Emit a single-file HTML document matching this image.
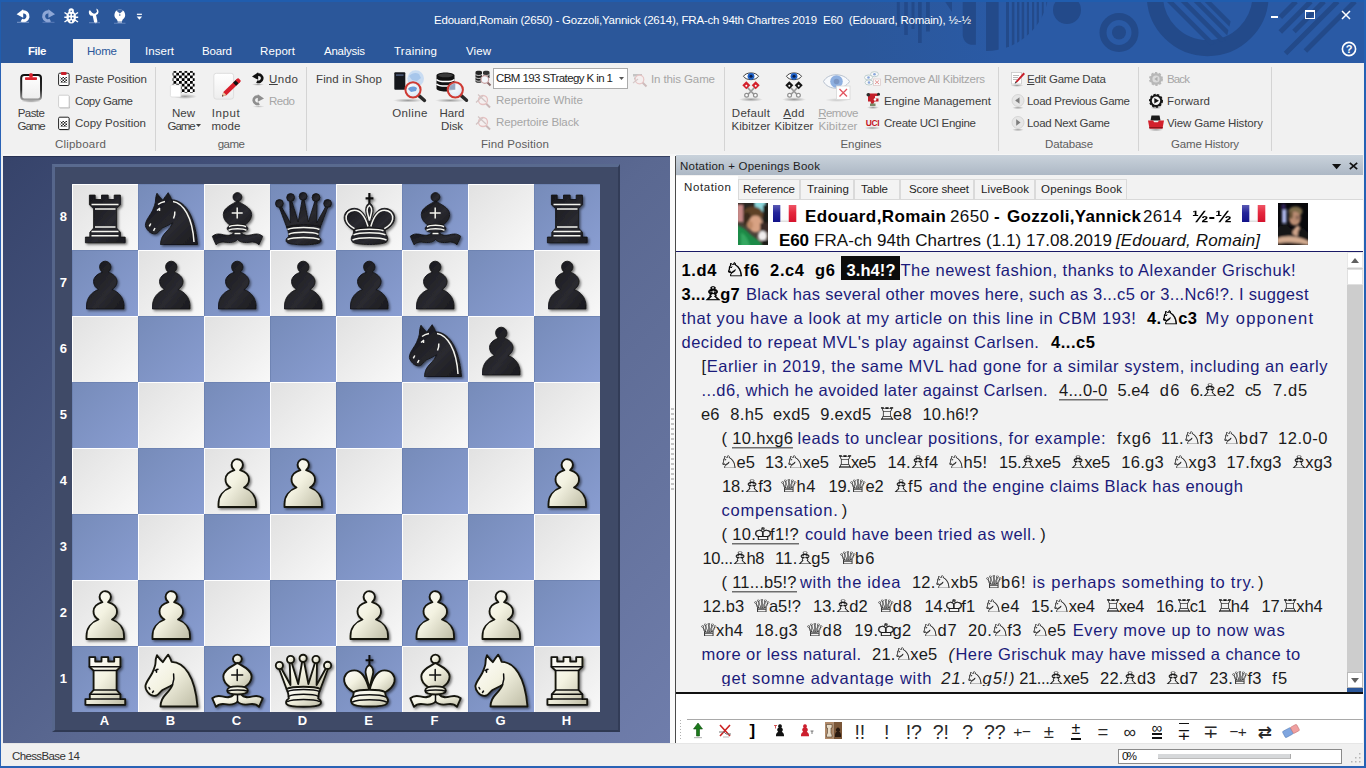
<!DOCTYPE html><html lang="en"><head><meta charset="utf-8"><title>ChessBase 14</title><style>
*{box-sizing:border-box;margin:0;padding:0}
html,body{width:1366px;height:768px;overflow:hidden}
body{position:relative;background:#2b579a;font-family:"Liberation Sans",sans-serif;font-size:11.5px;color:#404040}
.a{position:absolute}
.t{position:absolute;white-space:pre;display:block}
.t>span{display:inline-block}
svg{position:absolute;overflow:visible}
.g{color:#a6a6a6}
u{text-decoration:underline;text-underline-offset:1px}
.sep{position:absolute;top:67px;height:84px;width:1px;background:#d4d4d4}

.nl{position:absolute;white-space:pre;height:24px;line-height:24px;font-family:"Liberation Sans","DejaVu Sans",sans-serif;font-size:16.5px;color:#1a1a1a}
.nl>span{display:inline-block}
.nl .m{font-weight:bold;color:#000}
.nl .c{color:#1b1b7a}
.nl .iv{font-style:italic}
.nl .h{font-weight:bold;color:#fff}
.nl .u{background:linear-gradient(#6e6e6e,#6e6e6e) 0 21px/100% 1.5px no-repeat;display:inline-block;height:24px}
.nl i.f{display:inline-block;font-style:normal;font-weight:normal;font-family:"DejaVu Sans",sans-serif;font-size:17.5px;line-height:0;letter-spacing:0;text-align:center;width:14px;-webkit-text-stroke:.2px currentColor;vertical-align:baseline;text-decoration:none}
.nl i.f>b{font-weight:normal;display:inline-block;margin:0 -10px;transform:scaleX(1.3)}
.nl i.fN{width:15px}.nl i.fB{width:13.5px}.nl i.fR{width:12.5px}.nl i.fQ{width:14.5px}.nl i.fK{width:14px}
.nl i.fB>b{transform:scaleX(1.55)}.nl i.fR>b{transform:scaleX(1.2)}.nl i.fQ>b{transform:scaleX(1.25)}
.nl i.fB{-webkit-text-stroke:0}.nl i.fQ{-webkit-text-stroke:.12px currentColor}
.nl .m i.f{-webkit-text-stroke:.5px currentColor;font-size:18.5px}
.nl .m i.fN{width:16.5px}.nl .m i.fB{width:14.5px}
</style></head><body><div class="a" style="left:0px;top:0px;width:1366px;height:63px;background:#2b579a;"></div><div class="a" style="left:860px;top:0px;width:506px;height:63px;background:linear-gradient(90deg,#2b579a,#2a5aa5 140px)"></div><svg style="left:0px;top:0px" width="1366" height="63" viewBox="0 0 1366 63"><defs><clipPath id="cpA"><circle cx="986" cy="-12" r="63"/></clipPath><clipPath id="cpB"><path d="M1150 0H1236L1226 40L1195 50L1150 30Z"/></clipPath></defs><g fill="#234a8a"><rect x="896.8" y="0" width="3" height="27"/><rect x="904.2" y="0" width="3.6" height="35"/><rect x="911.5" y="0" width="3" height="29"/><rect x="918" y="0" width="3.7" height="43"/><rect x="926" y="0" width="3.8" height="31.5"/><path d="M944 0h8v12z"/><path d="M962.700 0H975.900V44.700H971C966 44 962.700 40 962.700 34Z"/></g><g clip-path="url(#cpA)" fill="#234a8a"><rect x="986" y="0" width="12.6" height="60"/><rect x="1006" y="0" width="3" height="60"/><rect x="1011.8" y="0" width="2.6" height="60"/><rect x="1017" y="0" width="2.4" height="60"/><rect x="1021.7" y="0" width="2.5" height="60"/><rect x="1026.9" y="0" width="2.1" height="60"/><rect x="1032" y="0" width="2.2" height="60"/><rect x="1036.7" y="0" width="2.2" height="60"/><rect x="1041.8" y="0" width="1.9" height="60"/><rect x="1046.2" y="0" width="1.2" height="60"/></g><circle cx="1067" cy="10" r="14" fill="#234a8a"/><circle cx="1119" cy="32.5" r="16" fill="none" stroke="#234a8a" stroke-width="7"/><circle cx="1119" cy="32.5" r="7" fill="#234a8a"/><circle cx="1207.700" cy="-4.800" r="52.900" fill="none" stroke="#234a8a" stroke-width="16.200"/><g clip-path="url(#cpB)" stroke="#234a8a" stroke-width="4.600"><line x1="1161.8" y1="-6.500" x2="1221.8" y2="53.500"/><line x1="1175.6" y1="-6.500" x2="1235.6" y2="53.500"/><line x1="1188.6" y1="-6.500" x2="1248.6" y2="53.500"/><line x1="1199.5" y1="-6.500" x2="1259.5" y2="53.500"/></g><line x1="1296" y1="1.5" x2="1280.3" y2="17.3" stroke="#234a8a" stroke-width="5"/><line x1="1310.8" y1="1.5" x2="1280.3" y2="32" stroke="#234a8a" stroke-width="5"/><line x1="1324" y1="1.5" x2="1294" y2="31.5" stroke="#234a8a" stroke-width="5"/><line x1="1337.6" y1="1.5" x2="1285.5" y2="53.6" stroke="#234a8a" stroke-width="5"/><line x1="1354.9" y1="1.5" x2="1305.4" y2="51" stroke="#234a8a" stroke-width="5"/></svg><div class="a" style="left:0px;top:0px;width:1366px;height:2px;background:#205dae;"></div><span id="t1" class="t" style="top:12.95px;line-height:15.5px;font-size:11.5px;left:434px;color:#fff;letter-spacing:-0.206px;"><span>Edouard,Romain (2650) - Gozzoli,Yannick (2614), FRA-ch 94th Chartres 2019  E60  (Edouard, Romain), ½-½</span></span><div class="a" style="left:1271px;top:16px;width:7px;height:2px;background:#fff;"></div><div class="a" style="left:1305px;top:10px;width:10px;height:9px;border:1px solid #fff;border-top-width:2px"></div><svg style="left:1341px;top:10px" width="10" height="10" viewBox="0 0 10 10"><path d="M1 1L9 9M9 1L1 9" stroke="#fff" stroke-width="1.500" fill="none"/></svg><svg style="left:1341px;top:41px" width="16" height="16" viewBox="0 0 16 16"><circle cx="8" cy="8" r="6.6" fill="none" stroke="#fff" stroke-width="1.6"/><text x="8" y="12" font-size="11" font-weight="bold" fill="#fff" text-anchor="middle" font-family="Liberation Sans, sans-serif">?</text></svg><svg style="left:0px;top:0px" width="160" height="38" viewBox="0 0 160 38"><path d="M22.840 11.970A4.400 4.400 0 1 1 21.400 20.100" fill="none" stroke="#fff" stroke-width="3.100"/><path d="M16.600 14.200L23.200 9.200V17.800Z" fill="#fff"/><rect x="17" y="21.800" width="12" height="1" fill="#8fa8d4" opacity=".8"/><g transform="translate(71.600,0) scale(-1,1)"><path d="M22.840 11.970A4.400 4.400 0 1 1 21.400 20.100" fill="none" stroke="#8ea7d6" stroke-width="3.100"/><path d="M16.600 14.200L23.200 9.200V17.800Z" fill="#8ea7d6"/></g><rect x="42.500" y="21.800" width="12" height="1" fill="#6f8cc4" opacity=".7"/><g fill="#fff"><ellipse cx="71.200" cy="17.300" rx="4.800" ry="6.300"/><circle cx="71.200" cy="11" r="2.700"/><path d="M64.500 12.500l3 2M64.300 17.300h3M64.500 22l3-2M78 12.500l-3 2M78.200 17.300h-3M78 22l-3-2" stroke="#fff" stroke-width="1.500"/></g><g fill="#2b579a"><circle cx="69.600" cy="14.800" r=".95"/><circle cx="72.800" cy="14.800" r=".95"/><circle cx="69.600" cy="18.300" r=".95"/><circle cx="72.800" cy="18.300" r=".95"/><circle cx="71.200" cy="21.300" r=".95"/><circle cx="71.200" cy="11.300" r=".8"/></g><g transform="rotate(-12 94 16)"><path d="M91.200 9.200a3.400 3.400 0 0 0 1.600 6.300l0 6.200a1.700 1.700 0 0 0 3.400 0l0-6.200a3.400 3.400 0 0 0 1.600-6.300l0 3.300-1.600 1.200-1.700 0-1.700-1.200z" fill="#fff"/></g><rect x="89" y="22.300" width="11" height=".9" fill="#8fa8d4" opacity=".7"/><path d="M119.800 9.600a5.400 5.400 0 0 1 3.200 9.700c-.6.600-.8 1.100-.8 1.700h-4.800c0-.6-.2-1.100-.8-1.700a5.400 5.400 0 0 1 3.200-9.700z" fill="#fff"/><rect x="117.600" y="21.400" width="4.400" height="1.100" fill="#fff"/><rect x="114" y="22.800" width="11.500" height=".8" fill="#8fa8d4" opacity=".7"/><path d="M119.800 9.600a5.400 5.400 0 0 0-3.300 1.200l3.300 2.600 3.300-2.600a5.400 5.400 0 0 0-3.300-1.200z" fill="#2b579a" opacity=".9"/><circle cx="119.800" cy="15" r=".8" fill="#2b579a"/><rect x="136.900" y="13.700" width="5" height="1.200" fill="#fff"/><path d="M136.700 16.600h5.400l-2.700 3.200z" fill="#fff"/></svg><div class="a" style="left:73px;top:39px;width:57px;height:24px;background:#f1f1f1;"></div><span id="t2" class="t" style="top:43.75px;line-height:15.5px;font-size:11.5px;left:28px;color:#fff;font-weight:bold;letter-spacing:-0.438px;"><span>File</span></span><span id="t3" class="t" style="top:43.75px;line-height:15.5px;font-size:11.5px;left:87px;color:#2b579a;letter-spacing:-0.229px;"><span>Home</span></span><span id="t4" class="t" style="top:43.75px;line-height:15.5px;font-size:11.5px;left:145px;color:#fff;letter-spacing:0.047px;"><span>Insert</span></span><span id="t5" class="t" style="top:43.75px;line-height:15.5px;font-size:11.5px;left:202px;color:#fff;letter-spacing:-0.172px;"><span>Board</span></span><span id="t6" class="t" style="top:43.75px;line-height:15.5px;font-size:11.5px;left:260px;color:#fff;letter-spacing:0.094px;"><span>Report</span></span><span id="t7" class="t" style="top:43.75px;line-height:15.5px;font-size:11.5px;left:324px;color:#fff;letter-spacing:-0.261px;"><span>Analysis</span></span><span id="t8" class="t" style="top:43.75px;line-height:15.5px;font-size:11.5px;left:394px;color:#fff;letter-spacing:0.268px;"><span>Training</span></span><span id="t9" class="t" style="top:43.75px;line-height:15.5px;font-size:11.5px;left:466px;color:#fff;letter-spacing:0.094px;"><span>View</span></span><div class="a" style="left:0px;top:63px;width:1366px;height:93px;background:#f1f1f1;"></div><div class="a" style="left:0px;top:154px;width:1366px;height:2px;background:#f6f6f6;"></div><div class="sep" style="left:155px"></div><div class="sep" style="left:306px"></div><div class="sep" style="left:724px"></div><div class="sep" style="left:998px"></div><div class="sep" style="left:1138px"></div><div class="sep" style="left:1271px"></div><span id="t10" class="t" style="top:105.95px;line-height:15.5px;font-size:11.5px;left:-119px;width:300px;text-align:center;letter-spacing:-0.605px;"><span>Paste</span></span><span id="t11" class="t" style="top:118.95px;line-height:15.5px;font-size:11.5px;left:-119px;width:300px;text-align:center;letter-spacing:-1.109px;"><span>Game</span></span><span id="t12" class="t" style="top:71.95px;line-height:15.5px;font-size:11.5px;left:75px;letter-spacing:-0.117px;"><span>Paste Position</span></span><span id="t13" class="t" style="top:93.95px;line-height:15.5px;font-size:11.5px;left:75px;letter-spacing:-0.420px;"><span>Copy Game</span></span><span id="t14" class="t" style="top:115.95px;line-height:15.5px;font-size:11.5px;left:75px;letter-spacing:0.003px;"><span>Copy Position</span></span><span id="t15" class="t" style="top:136.95px;line-height:15.5px;font-size:11.5px;left:-69.5px;width:300px;text-align:center;color:#5e5e5e;letter-spacing:0.221px;"><span>Clipboard</span></span><span id="t16" class="t" style="top:105.95px;line-height:15.5px;font-size:11.5px;left:33.5px;width:300px;text-align:center;letter-spacing:-0.008px;"><span>New</span></span><span id="t17" class="t" style="top:118.95px;line-height:15.5px;font-size:11.5px;left:31px;width:300px;text-align:center;letter-spacing:-1.109px;"><span>Game</span></span><svg style="left:196px;top:124px" width="6" height="4" viewBox="0 0 6 4"><path d="M0 0h5l-2.500 3z" fill="#444"/></svg><span id="t18" class="t" style="top:105.95px;line-height:15.5px;font-size:11.5px;left:76px;width:300px;text-align:center;letter-spacing:0.605px;"><span>Input</span></span><span id="t19" class="t" style="top:118.95px;line-height:15.5px;font-size:11.5px;left:76px;width:300px;text-align:center;letter-spacing:0.073px;"><span>mode</span></span><span id="t20" class="t" style="top:71.95px;line-height:15.5px;font-size:11.5px;left:269px;letter-spacing:0.500px;"><span><u>U</u>ndo</span></span><span id="t21" class="t" style="top:93.95px;line-height:15.5px;font-size:11.5px;left:269px;color:#a6a6a6;letter-spacing:-0.500px;"><span>Redo</span></span><span id="t22" class="t" style="top:136.95px;line-height:15.5px;font-size:11.5px;left:81px;width:300px;text-align:center;color:#5e5e5e;letter-spacing:-0.594px;"><span>game</span></span><span id="t23" class="t" style="top:71.95px;line-height:15.5px;font-size:11.5px;left:316px;letter-spacing:0.129px;"><span>Find in Shop</span></span><span id="t24" class="t" style="top:105.95px;line-height:15.5px;font-size:11.5px;left:260px;width:300px;text-align:center;letter-spacing:0.350px;"><span>Online</span></span><span id="t25" class="t" style="top:105.95px;line-height:15.5px;font-size:11.5px;left:302px;width:300px;text-align:center;letter-spacing:0.021px;"><span>Hard</span></span><span id="t26" class="t" style="top:118.95px;line-height:15.5px;font-size:11.5px;left:302px;width:300px;text-align:center;letter-spacing:-0.125px;"><span>Disk</span></span><div class="a" style="left:493px;top:68px;width:135px;height:21px;background:#fff;border:1px solid #ababab"></div><span id="t27" class="t" style="top:71.45px;line-height:15.5px;font-size:11.5px;left:496px;color:#1e1e1e;letter-spacing:-0.589px;width:119px;overflow:hidden;"><span>CBM 193 STrategy K in 1</span></span><svg style="left:619px;top:77px" width="6" height="4" viewBox="0 0 6 4"><path d="M0 0h5l-2.500 3z" fill="#555"/></svg><span id="t28" class="t" style="top:92.95px;line-height:15.5px;font-size:11.5px;left:496px;color:#a6a6a6;letter-spacing:0.047px;"><span>Repertoire White</span></span><span id="t29" class="t" style="top:114.95px;line-height:15.5px;font-size:11.5px;left:496px;color:#a6a6a6;letter-spacing:-0.134px;"><span>Repertoire Black</span></span><span id="t30" class="t" style="top:71.95px;line-height:15.5px;font-size:11.5px;left:651px;color:#a6a6a6;letter-spacing:-0.109px;"><span>In this Game</span></span><span id="t31" class="t" style="top:136.95px;line-height:15.5px;font-size:11.5px;left:365px;width:300px;text-align:center;color:#5e5e5e;letter-spacing:0.126px;"><span>Find Position</span></span><span id="t32" class="t" style="top:105.95px;line-height:15.5px;font-size:11.5px;left:601px;width:300px;text-align:center;letter-spacing:0.260px;"><span>Default</span></span><span id="t33" class="t" style="top:118.95px;line-height:15.5px;font-size:11.5px;left:601px;width:300px;text-align:center;letter-spacing:0.092px;"><span>Kibitzer</span></span><span id="t34" class="t" style="top:105.95px;line-height:15.5px;font-size:11.5px;left:644px;width:300px;text-align:center;letter-spacing:0.266px;"><span><u>A</u>dd</span></span><span id="t35" class="t" style="top:118.95px;line-height:15.5px;font-size:11.5px;left:644px;width:300px;text-align:center;letter-spacing:0.092px;"><span>Kibitzer</span></span><span id="t36" class="t" style="top:105.95px;line-height:15.5px;font-size:11.5px;left:688px;width:300px;text-align:center;color:#a6a6a6;letter-spacing:-0.569px;"><span><u>R</u>emove</span></span><span id="t37" class="t" style="top:118.95px;line-height:15.5px;font-size:11.5px;left:688px;width:300px;text-align:center;color:#a6a6a6;letter-spacing:0.092px;"><span>Kibitzer</span></span><span id="t38" class="t" style="top:71.95px;line-height:15.5px;font-size:11.5px;left:884px;color:#a6a6a6;letter-spacing:-0.235px;"><span>Remove All Kibitzers</span></span><span id="t39" class="t" style="top:93.95px;line-height:15.5px;font-size:11.5px;left:884px;letter-spacing:0.054px;"><span>Engine Management</span></span><span id="t40" class="t" style="top:115.95px;line-height:15.5px;font-size:11.5px;left:884px;letter-spacing:-0.283px;"><span>Create UCI Engine</span></span><span id="t41" class="t" style="top:136.95px;line-height:15.5px;font-size:11.5px;left:711px;width:300px;text-align:center;color:#5e5e5e;letter-spacing:-0.094px;"><span>Engines</span></span><span id="t42" class="t" style="top:71.95px;line-height:15.5px;font-size:11.5px;left:1027px;letter-spacing:-0.218px;"><span><u>E</u>dit Game Data</span></span><span id="t43" class="t" style="top:93.95px;line-height:15.5px;font-size:11.5px;left:1027px;letter-spacing:-0.297px;"><span>Load Previous Game</span></span><span id="t44" class="t" style="top:115.95px;line-height:15.5px;font-size:11.5px;left:1027px;letter-spacing:-0.303px;"><span>Load Next Game</span></span><span id="t45" class="t" style="top:136.95px;line-height:15.5px;font-size:11.5px;left:919px;width:300px;text-align:center;color:#5e5e5e;letter-spacing:-0.176px;"><span>Database</span></span><span id="t46" class="t" style="top:71.95px;line-height:15.5px;font-size:11.5px;left:1167px;color:#a6a6a6;letter-spacing:-0.859px;"><span>Back</span></span><span id="t47" class="t" style="top:93.95px;line-height:15.5px;font-size:11.5px;left:1167px;letter-spacing:0.135px;"><span>Forward</span></span><span id="t48" class="t" style="top:115.95px;line-height:15.5px;font-size:11.5px;left:1167px;letter-spacing:-0.139px;"><span>View Game History</span></span><span id="t49" class="t" style="top:136.95px;line-height:15.5px;font-size:11.5px;left:1055px;width:300px;text-align:center;color:#5e5e5e;letter-spacing:-0.209px;"><span>Game History</span></span><svg width="0" height="0" style="left:0;top:0"><defs><linearGradient id="pgw" x1="0" y1="0" x2="0" y2="1"><stop offset="0" stop-color="#fff"/><stop offset="1" stop-color="#ededed"/></linearGradient><linearGradient id="clipb" x1="0" y1="0" x2="0" y2="1"><stop offset="0" stop-color="#111"/><stop offset=".6" stop-color="#2a2a2a"/><stop offset="1" stop-color="#9a9a9a"/></linearGradient><radialGradient id="lens" cx=".4" cy=".35" r=".8"><stop offset="0" stop-color="#ffffff"/><stop offset="1" stop-color="#cfe0f2"/></radialGradient><radialGradient id="shd" cx=".5" cy=".5" r=".5"><stop offset="0" stop-color="#000" stop-opacity=".35"/><stop offset="1" stop-color="#000" stop-opacity="0"/></radialGradient><pattern id="chk" width="5.500" height="5.500" patternUnits="userSpaceOnUse"><rect width="5.500" height="5.500" fill="#fff"/><rect width="2.750" height="2.750" fill="#000"/><rect x="2.750" y="2.750" width="2.750" height="2.750" fill="#000"/></pattern><pattern id="chks" width="3" height="3" patternUnits="userSpaceOnUse"><rect width="3" height="3" fill="#fff"/><rect width="1.500" height="1.500" fill="#222"/><rect x="1.500" y="1.500" width="1.500" height="1.500" fill="#222"/></pattern></defs></svg><svg style="left:18px;top:70px" width="26" height="34" viewBox="0 0 26 34"><ellipse cx="13" cy="31" rx="10" ry="1.800" fill="url(#shd)"/><rect x="3.200" y="5" width="19.800" height="24.500" rx="3" fill="url(#pgw)" stroke="url(#clipb)" stroke-width="2"/><rect x="7" y="7.200" width="12" height="2.800" rx=".8" fill="#d9232e"/><rect x="11.300" y="3.300" width="3.400" height="4.500" rx="1" fill="#d9232e"/></svg><svg style="left:57.5px;top:72px" width="13" height="15" viewBox="0 0 13 15"><rect x=".6" y="1.200" width="10.500" height="12.300" rx="1.200" fill="#fff" stroke="#222" stroke-width="1"/><rect x="3" y="0" width="5.500" height="3" rx=".8" fill="#c8202b"/><rect x="2.600" y="5" width="6.500" height="6" fill="url(#chks)"/></svg><svg style="left:57.5px;top:93.5px" width="13" height="15" viewBox="0 0 13 15"><rect x="1.500" y="2" width="10.500" height="12.500" rx="1" fill="#bdbdbd"/><rect x=".6" y="1.200" width="10.500" height="12.300" rx="1.200" fill="#fff" stroke="#cfcfcf" stroke-width="1"/></svg><svg style="left:57.5px;top:115.5px" width="13" height="15" viewBox="0 0 13 15"><rect x="1.500" y="2" width="10.500" height="12.500" rx="1" fill="#bdbdbd"/><rect x=".6" y="1.200" width="10.500" height="12.300" rx="1.200" fill="#fff" stroke="#222" stroke-width="1"/><rect x="2.600" y="5" width="6.500" height="6" fill="url(#chks)"/></svg><svg style="left:168px;top:70px" width="30" height="32" viewBox="0 0 30 32"><ellipse cx="17" cy="26.500" rx="12" ry="2.500" fill="url(#shd)"/><rect x="4.600" y="1.100" width="22" height="21.500" fill="url(#chk)"/><rect x="2.400" y="15" width="10.500" height="12" rx="1.500" fill="#fff" stroke="#dcdcdc" stroke-width=".8"/></svg><svg style="left:211px;top:70px" width="32" height="32" viewBox="0 0 32 32"><rect x="2.800" y="3.300" width="19.800" height="25.800" rx="2.500" fill="url(#pgw)" stroke="#dedede" stroke-width="1"/><g transform="translate(11,26.400) rotate(-44)"><path d="M0 0L4 -2.200H23V2.200H4Z" fill="#d81e2b"/><path d="M0 0L4 -2.200V2.200Z" fill="#e9c9a0"/><path d="M0 0L1.600 -.9V.9Z" fill="#333"/><rect x="17.500" y="-2.200" width="3.600" height="4.400" fill="#111"/><rect x="21.100" y="-2.200" width="3.400" height="4.400" rx="1" fill="#d81e2b"/></g></svg><svg style="left:250.5px;top:71.5px" width="15" height="15" viewBox="0 0 15 15"><ellipse cx="7" cy="12.500" rx="6" ry="1.300" fill="url(#shd)"/><path d="M6.900 2.600A3.700 3.700 0 1 1 5.800 9.500" fill="none" stroke="#111" stroke-width="2.700"/><path d="M1 4.600L7.200 .2V7.800Z" fill="#111"/></svg><svg style="left:251px;top:93.5px" width="15" height="15" viewBox="0 0 15 15"><ellipse cx="7.500" cy="12.500" rx="6" ry="1.300" fill="url(#shd)" opacity=".6"/><g transform="translate(14,0) scale(-1,1)"><path d="M6.900 2.600A3.700 3.700 0 1 1 5.800 9.500" fill="none" stroke="#8e8e8e" stroke-width="2.700"/><path d="M1 4.600L7.200 .2V7.800Z" fill="#8e8e8e"/></g></svg><svg style="left:390px;top:68px" width="40" height="36" viewBox="0 0 40 36"><ellipse cx="18" cy="32.500" rx="15" ry="2" fill="url(#shd)"/><circle cx="25.700" cy="10.500" r="8.300" fill="#c9dcf2"/><path d="M19 8c3-3 7-4 10-2l2 4-4 3-5-1z" fill="#9fc0e8" opacity=".8"/><rect x="4.300" y="4.200" width="11" height="17.600" rx="1" fill="#15171c"/><rect x="6" y="6.300" width="7.500" height="1.600" fill="#4a5875"/><g opacity="1"><line x1="28.32" y1="27.12" x2="34.5" y2="32.5" stroke="#2a2a2a" stroke-width="3.400" stroke-linecap="round"/><circle cx="23" cy="21.8" r="7.6" fill="url(#lens)" fill-opacity=".92" stroke="#cf3a33" stroke-width="2"/></g><path d="M18 21c2-3 6-3 9-1l-1 3-5 1z" fill="#3f7fd0" opacity=".75"/></svg><svg style="left:433px;top:68px" width="40" height="36" viewBox="0 0 40 36"><ellipse cx="17" cy="32.500" rx="15" ry="2" fill="url(#shd)"/><path d="M3.500 7.500C3.500 3.500 21.500 3.500 21.500 7.500V20.500C21.500 24.500 3.500 24.500 3.500 20.500Z" fill="#111"/><path d="M3.500 11.500C6 14.300 19 14.300 21.500 11.500M3.500 16C6 18.800 19 18.800 21.500 16" stroke="#fff" stroke-width="1.500" fill="none"/><ellipse cx="12.500" cy="7.300" rx="7.500" ry="2" fill="#3a3a3a"/><g opacity="1"><line x1="27.62" y1="27.12" x2="33.5" y2="32.3" stroke="#2a2a2a" stroke-width="3.400" stroke-linecap="round"/><circle cx="22.3" cy="21.8" r="7.6" fill="url(#lens)" fill-opacity=".92" stroke="#cf3a33" stroke-width="2"/></g><path d="M22.300 21.800V15.500A6.300 6.300 0 0 0 16 21.800Z" fill="#7f95b5" opacity=".8"/></svg><svg style="left:474px;top:69px" width="18" height="18" viewBox="0 0 18 18"><path d="M1.500 3C1.500 1.200 8 1.200 8 3V12.500C8 14.300 1.500 14.300 1.500 12.500Z" fill="#222"/><path d="M9 3C9 1.200 15.500 1.200 15.500 3V9H9Z" fill="#333"/><path d="M1.500 5.500C3 6.800 6.500 6.800 8 5.500M1.500 8.500C3 9.800 6.500 9.800 8 8.500M1.500 11.300C3 12.600 6.500 12.600 8 11.300M9 5.500C10.500 6.800 14 6.800 15.500 5.500" stroke="#ddd" stroke-width=".9" fill="none"/><line x1="13" y1="13" x2="16.500" y2="16.500" stroke="#8a6a6a" stroke-width="2"/><circle cx="10.800" cy="10.500" r="3.800" fill="#f3f6fa" stroke="#c9a0a0" stroke-width="1.200"/></svg><svg style="left:475px;top:91.5px" width="17" height="17" viewBox="0 0 17 17"><g opacity=".55"><line x1="10.500" y1="11" x2="15" y2="15.500" stroke="#a88" stroke-width="2"/><circle cx="8" cy="8" r="4.500" fill="#f7eeee" stroke="#d99" stroke-width="1.300"/><path d="M1 10.500L8 3.500M3 2.500L11 10" stroke="#b9a0a0" stroke-width="1.200"/></g></svg><svg style="left:475px;top:113.5px" width="17" height="17" viewBox="0 0 17 17"><g opacity=".55"><line x1="10.500" y1="11" x2="15" y2="15.500" stroke="#a88" stroke-width="2"/><circle cx="8" cy="8" r="4.500" fill="#f7eeee" stroke="#d99" stroke-width="1.300"/><path d="M1 10.500L8 3.500M3 2.500L11 10" stroke="#b9a0a0" stroke-width="1.200"/></g></svg><svg style="left:631px;top:70.5px" width="18" height="17" viewBox="0 0 18 17"><g opacity=".5"><path d="M2 3h9v2.500H2zM3 6.500h7v2H3z" fill="#999"/><line x1="11" y1="11" x2="15.500" y2="15.500" stroke="#a88" stroke-width="2"/><circle cx="8.500" cy="8.500" r="4.300" fill="#f7eeee" stroke="#d99" stroke-width="1.200"/><path d="M2 12l5-4" stroke="#b9a0a0" stroke-width="1.100"/></g></svg><svg style="left:735.5px;top:68px" width="30" height="36" viewBox="0 0 30 36"><ellipse cx="15" cy="31.500" rx="12" ry="2.200" fill="url(#shd)"/><path d="M7.500 8.300C10 3.800 20 3.800 22.500 8.300C20 12.800 10 12.800 7.500 8.300Z" fill="#fff" stroke="#2b2b2b" stroke-width=".9"/><circle cx="15" cy="8.300" r="3.400" fill="#1d5fc4"/><circle cx="15" cy="8.300" r="1.500" fill="#0a1e4a"/><path d="M11 19L19 27.500M19 19L11 27.500" stroke="#9a9a9a" stroke-width="1.800"/><circle cx="10.600" cy="27.300" r="1.900" fill="#fff" stroke="#8f8f8f" stroke-width="1.200"/><circle cx="19.400" cy="27.300" r="1.900" fill="#fff" stroke="#8f8f8f" stroke-width="1.200"/><path d="M10.300 13.300L14.300 17.300L10.300 21.300L6.300 17.300Z" fill="#d3202c"/><path d="M19.700 13.300L23.700 17.300L19.700 21.300L15.700 17.300Z" fill="#d3202c"/><circle cx="10.300" cy="17.800" r="1" fill="#fff"/><circle cx="19.700" cy="17.800" r="1" fill="#fff"/></svg><svg style="left:778.5px;top:68px" width="30" height="36" viewBox="0 0 30 36"><ellipse cx="15" cy="31.500" rx="12" ry="2.200" fill="url(#shd)"/><path d="M7.500 8.300C10 3.800 20 3.800 22.500 8.300C20 12.800 10 12.800 7.500 8.300Z" fill="#fff" stroke="#2b2b2b" stroke-width=".9"/><circle cx="15" cy="8.300" r="3.400" fill="#1d5fc4"/><circle cx="15" cy="8.300" r="1.500" fill="#0a1e4a"/><path d="M11 19L19 27.500M19 19L11 27.500" stroke="#9a9a9a" stroke-width="1.800"/><circle cx="10.600" cy="27.300" r="1.900" fill="#fff" stroke="#8f8f8f" stroke-width="1.200"/><circle cx="19.400" cy="27.300" r="1.900" fill="#fff" stroke="#8f8f8f" stroke-width="1.200"/><path d="M10.300 13.300L14.300 17.300L10.300 21.300L6.300 17.300Z" fill="#151515"/><path d="M19.700 13.300L23.700 17.300L19.700 21.300L15.700 17.300Z" fill="#151515"/><circle cx="10.300" cy="17.800" r="1" fill="#fff"/><circle cx="19.700" cy="17.800" r="1" fill="#fff"/></svg><svg style="left:820px;top:68px" width="36" height="36" viewBox="0 0 36 36"><ellipse cx="17" cy="32" rx="12" ry="2" fill="url(#shd)" opacity=".5"/><path d="M3.500 13.500C8 4.500 24 4.500 29.500 13.500C24 22.500 8 22.500 3.500 13.500Z" fill="#f7f9fc" stroke="#b8c2d0" stroke-width="1"/><circle cx="16.500" cy="13.500" r="6.300" fill="#8fb0e0"/><circle cx="16.500" cy="13.500" r="2.800" fill="#7b96c4"/><rect x="16.500" y="18" width="13.500" height="13.500" fill="#fff" stroke="#d8d8d8" stroke-width=".8"/><path d="M19.500 21L27 28.500M27 21L19.500 28.500" stroke="#e2535e" stroke-width="1.300"/></svg><svg style="left:864px;top:71px" width="17" height="16" viewBox="0 0 17 16"><g opacity=".6"><ellipse cx="10.500" cy="3.200" rx="4" ry="2.500" fill="#fff" stroke="#8aa" stroke-width=".8"/><circle cx="10.500" cy="3.200" r="1.300" fill="#47c"/><ellipse cx="4.500" cy="6.500" rx="4" ry="2.500" fill="#fff" stroke="#8aa" stroke-width=".8"/><circle cx="4.500" cy="6.500" r="1.300" fill="#47c"/><ellipse cx="5" cy="11.500" rx="4" ry="2.500" fill="#fff" stroke="#8aa" stroke-width=".8"/><circle cx="5" cy="11.500" r="1.300" fill="#47c"/><rect x="9.500" y="8" width="7" height="6.500" fill="#fff" stroke="#caa" stroke-width=".7"/><path d="M11 9.500l4 3.500M15 9.500l-4 3.500" stroke="#d55" stroke-width="1"/></g></svg><svg style="left:865px;top:92px" width="16" height="18" viewBox="0 0 16 18"><ellipse cx="8" cy="15.500" rx="6" ry="1.600" fill="url(#shd)"/><path d="M3 1.500h10v2.500h-3v2.500h3.500v3h-4l-1.500 3h-1.500l-1-3H3z" fill="#c4202b"/><circle cx="3.300" cy="2.800" r="1.800" fill="#2b2b2b"/><circle cx="13.500" cy="2.300" r="1.500" fill="#2b2b2b"/><rect x="5" y="11.500" width="5.500" height="2.500" fill="#7a8a6a"/><circle cx="10" cy="7.500" r="1.300" fill="#fff"/></svg><svg style="left:863px;top:115px" width="19" height="16" viewBox="0 0 19 16"><ellipse cx="9.500" cy="13" rx="8" ry="1.700" fill="url(#shd)"/><text x="9.500" y="10.500" font-size="8.500" font-weight="bold" fill="#c4141f" text-anchor="middle" font-family="Liberation Sans, sans-serif" letter-spacing="-.3">UCI</text></svg><svg style="left:1009px;top:71px" width="17" height="17" viewBox="0 0 17 17"><ellipse cx="8" cy="14.500" rx="6.500" ry="1.400" fill="url(#shd)"/><rect x="2.500" y="1.500" width="10" height="11.500" fill="#fff" stroke="#c9c9c9" stroke-width=".8"/><path d="M4 4.500h6M4 6.500h5M4 8.500h4" stroke="#aaa" stroke-width=".8"/><path d="M6.500 10.500L14.500 1.500L16 3L8 11.500Z" fill="#c81f2a"/><path d="M6.500 10.500l-.8 2.200 2.300-1.200z" fill="#333"/></svg><svg style="left:1009.5px;top:93px" width="16" height="17" viewBox="0 0 16 17"><ellipse cx="8" cy="14.800" rx="6" ry="1.300" fill="url(#shd)"/><circle cx="8" cy="7.500" r="6" fill="#e6e6e6" stroke="#cfcfcf" stroke-width=".8"/><path d="M9.500 4.200L5.200 7.500L9.500 10.800Z" fill="#7d7d7d"/></svg><svg style="left:1009.5px;top:115px" width="16" height="17" viewBox="0 0 16 17"><ellipse cx="8" cy="14.800" rx="6" ry="1.300" fill="url(#shd)"/><circle cx="8" cy="7.500" r="6" fill="#e6e6e6" stroke="#cfcfcf" stroke-width=".8"/><path d="M6.200 4.200L10.500 7.500L6.200 10.800Z" fill="#7d7d7d"/></svg><svg style="left:1148px;top:71px" width="16" height="16" viewBox="0 0 16 16"><g opacity=".55"><circle cx="8" cy="8" r="6" fill="#8a8a8a" stroke="#8a8a8a" stroke-width="2" stroke-dasharray="2.200 1.600"/><circle cx="8" cy="8" r="3.600" fill="#c9c9c9"/><path d="M9.500 5.800L6.300 8L9.500 10.200Z" fill="#777"/></g></svg><svg style="left:1148px;top:93px" width="16" height="17" viewBox="0 0 16 17"><ellipse cx="8" cy="14.800" rx="6" ry="1.300" fill="url(#shd)"/><circle cx="8" cy="7.800" r="6.200" fill="#151515" stroke="#151515" stroke-width="1.600" stroke-dasharray="2.200 1.500"/><circle cx="8" cy="7.800" r="4.200" fill="#f4f4f4"/><path d="M6.300 5L11 7.800L6.300 10.600Z" fill="#151515"/></svg><svg style="left:1147px;top:114px" width="18" height="18" viewBox="0 0 18 18"><ellipse cx="9" cy="15.800" rx="7.500" ry="1.500" fill="url(#shd)"/><path d="M4.500 1.500h8l1 5h-10z" fill="#1c1c1c"/><path d="M1 6.500h5l1.200 1.800h3.600L12 6.500h5l-1.500 8H2.500z" fill="#d3202c"/><path d="M2.500 14.500h13l.3-1.500h-13.600z" fill="#8f1219"/></svg><div class="a" style="left:3px;top:156px;width:667px;height:587px;background:linear-gradient(135deg,#36436a 0%,#485680 28%,#5a6891 52%,#65739e 78%,#6f7dab 100%)"></div><div class="a" style="left:3px;top:156px;width:667px;height:1px;background:rgba(30,38,66,.6);"></div><div class="a" style="left:52px;top:164px;width:568px;height:568px;background:#3f4a67;border-top:3px solid #596a8f;border-left:3px solid #56668b;border-right:2px solid #323c57;border-bottom:2px solid #2f3953"></div><svg style="left:72px;top:184px" width="528" height="528" viewBox="0 0 528 528"><defs><linearGradient id="wg" x1="0" y1="0" x2="1" y2="1"><stop offset="0" stop-color="#ffffff"/><stop offset=".45" stop-color="#f3f2e1"/><stop offset="1" stop-color="#bdbba4"/></linearGradient><linearGradient id="kg" x1="0" y1="0" x2="1" y2="1"><stop offset="0" stop-color="#15151a"/><stop offset=".6" stop-color="#2a2a30"/><stop offset="1" stop-color="#1a1a1e"/></linearGradient><filter id="sh" x="-20%" y="-20%" width="150%" height="150%"><feDropShadow dx="1.6" dy="1.6" stdDeviation="0.9" flood-color="#000" flood-opacity=".5"/></filter><g id="wp" filter="url(#sh)"><path d="M33.2 11.2C36.5 11.2 38.9 13.8 38.9 16.8C38.9 19.200 37.700 21 36.100 22.200C41.500 23.800 45 27.500 45 31.500C45 35 43 37.800 40 39.500C47 42 52 48 52 56L52 59L14.500 59L14.500 56C14.500 48 19.500 42 26.500 39.500C23.500 37.800 21.500 35 21.500 31.500C21.500 27.500 25 23.800 30.400 22.200C28.800 21 27.600 19.200 27.600 16.800C27.600 13.800 30 11.200 33.200 11.200Z" fill="url(#wg)" stroke="#15150f" stroke-width="1.850" stroke-linejoin="round"/></g><g id="bp" filter="url(#sh)"><path d="M33.2 11.2C36.5 11.2 38.9 13.8 38.9 16.8C38.9 19.200 37.700 21 36.100 22.200C41.500 23.800 45 27.500 45 31.500C45 35 43 37.800 40 39.500C47 42 52 48 52 56L52 59L14.500 59L14.500 56C14.500 48 19.500 42 26.500 39.500C23.500 37.800 21.500 35 21.500 31.500C21.500 27.500 25 23.800 30.400 22.200C28.800 21 27.600 19.200 27.600 16.800C27.600 13.800 30 11.200 33.200 11.200Z" fill="url(#kg)" stroke="#111" stroke-width=".8" stroke-linejoin="round"/></g><g id="wr" filter="url(#sh)"><path d="M17.4 11.1H23.2V15.5H29.5V11.1H36.2V15.5H42.200V11.100H48.400V20.800L44.600 24.600V44L48.400 48.300V53.100H53.200V58.800H13.400V53.100H17.800V48.300L21.600 44V24.600L17.400 20.800Z" fill="url(#wg)" stroke="#15150f" stroke-width="1.850" stroke-linejoin="round"/><path d="M17.4 20.8H48.4M21.600 24.600H44.600M21.600 44H44.600M17.800 48.300H48.400M17.800 53.100H48.400" fill="none" stroke="#111" stroke-width="1.5" stroke-linecap="round"/></g><g id="br" filter="url(#sh)"><path d="M17.4 11.1H23.2V15.5H29.5V11.1H36.2V15.5H42.200V11.100H48.400V20.800L44.600 24.600V44L48.400 48.300V53.100H53.200V58.800H13.400V53.100H17.800V48.300L21.600 44V24.600L17.400 20.800Z" fill="url(#kg)" stroke="#111" stroke-width=".8" stroke-linejoin="round"/><path d="M19.5 20.500H46.500M23 25H43.500M23 43H43.500M19.500 47.400H46.500M19.500 51.800H46.500" fill="none" stroke="#f4f4ee" stroke-width="1.5" stroke-linecap="butt"/></g><g id="wn" filter="url(#sh)"><path d="M19 9.2C20.5 11.5 22.5 14 24.800 16.200C26.500 13.500 28.500 10.800 30.200 8.700C31.500 11 33 13.500 33.600 15.800C46 16 57 30 59.500 60.500L22.500 60.500C22.500 55 25 51 28 48C31 45 33.500 42 34.500 38.800C31 41 27 42.500 24.500 44C22 46 20.500 48.300 18.500 49.500C15.500 50.500 12 49 10 46.500C8 44 7 42.500 7.500 39.500C8.500 35 12.500 31 14.500 26.500C16 23 17.500 19 17.500 17C17.500 14 18 11.500 19 9.200Z" fill="url(#wg)" stroke="#15150f" stroke-width="1.850" stroke-linejoin="round"/><path d="M34.500 38.800C35.800 35.500 36.300 31.500 35.600 28" fill="none" stroke="#111" stroke-width="1.5" stroke-linecap="round"/><path d="M17 24.500l3-1.300M18.500 23.500v2.800" fill="none" stroke="#111" stroke-width="1.5" stroke-linecap="round"/><path d="M11 41.500l.8 1.500M14.500 46.500l1-1.500" fill="none" stroke="#111" stroke-width="1.5" stroke-linecap="round" stroke-width="1.100"/></g><g id="bn" filter="url(#sh)"><path d="M19 9.2C20.5 11.5 22.5 14 24.800 16.200C26.500 13.500 28.500 10.800 30.200 8.700C31.500 11 33 13.500 33.600 15.800C46 16 57 30 59.500 60.500L22.500 60.500C22.500 55 25 51 28 48C31 45 33.500 42 34.500 38.800C31 41 27 42.500 24.500 44C22 46 20.500 48.300 18.500 49.500C15.500 50.500 12 49 10 46.500C8 44 7 42.500 7.500 39.500C8.500 35 12.500 31 14.500 26.500C16 23 17.500 19 17.500 17C17.500 14 18 11.500 19 9.200Z" fill="url(#kg)" stroke="#111" stroke-width=".8" stroke-linejoin="round"/><path d="M35 17.500C45 19 54.500 33 56 58" fill="none" stroke="#f4f4ee" stroke-width="1.5" stroke-linecap="butt" stroke-width="1.700"/><path d="M20 20.500C22 19 24.500 18 27 17.500M19 26.500l3-2.500M21.500 24v3M36.800 27.500C37 30 36.500 32.500 35.500 34.500M12.800 39.500l-1.500 2.800M17 44l-1.500 2.800" fill="none" stroke="#f4f4ee" stroke-width="1.5" stroke-linecap="butt" stroke-width="1.300"/></g><g id="wb" filter="url(#sh)"><path d="M33.5 55.5C31 58.500 26 59 21 58.200C17.500 57.700 14.500 58.200 12 60.800L8.300 52.300C11 50 14 49.500 18 50.400C22 51.300 27 52.500 30 48.300L37 48.300C40 52.500 45 51.300 49 50.400C53 49.500 56 50 58.700 52.300L55 60.800C52.500 58.200 49.500 57.700 46 58.200C41 59 36 58.500 33.500 55.500Z" fill="url(#wg)" stroke="#15150f" stroke-width="1.850" stroke-linejoin="round"/><path d="M33.4 8.6a4.4 4.4 0 1 0 .01 0z" fill="url(#wg)" stroke="#15150f" stroke-width="1.850" stroke-linejoin="round"/><path d="M33.4 17C38 20 47.600 23.500 47.600 30.500C47.600 35.500 44 39 40.500 41.200L26.300 41.200C22.800 39 19.300 35.500 19.300 30.500C19.300 23.500 28.800 20 33.400 17Z" fill="url(#wg)" stroke="#15150f" stroke-width="1.850" stroke-linejoin="round"/><path d="M23.2 44.5C23.2 41.5 28 40.3 33.500 40.300C39 40.300 43.800 41.500 43.800 44.500C43.800 47.200 40 48.300 33.500 48.300C27 48.300 23.200 47.200 23.200 44.500Z" fill="url(#wg)" stroke="#15150f" stroke-width="1.850" stroke-linejoin="round"/><path d="M33.2 23.5V34.5M27.700 29H38.700" fill="none" stroke="#111" stroke-width="1.5" stroke-linecap="round"/><path d="M23.5 45.200C27 43.500 40 43.500 43.500 45.200" fill="none" stroke="#111" stroke-width="1.5" stroke-linecap="round"/><path d="M33.5 49v6" fill="none" stroke="#111" stroke-width="1.5" stroke-linecap="round"/></g><g id="bb" filter="url(#sh)"><path d="M33.5 55.5C31 58.500 26 59 21 58.200C17.500 57.700 14.500 58.200 12 60.800L8.300 52.300C11 50 14 49.500 18 50.400C22 51.300 27 52.500 30 48.300L37 48.300C40 52.500 45 51.300 49 50.400C53 49.500 56 50 58.700 52.300L55 60.800C52.500 58.200 49.500 57.700 46 58.200C41 59 36 58.500 33.500 55.500Z" fill="url(#kg)" stroke="#111" stroke-width=".8" stroke-linejoin="round"/><path d="M33.4 8.6a4.4 4.4 0 1 0 .01 0z" fill="url(#kg)" stroke="#111" stroke-width=".8" stroke-linejoin="round"/><path d="M33.4 17C38 20 47.600 23.500 47.600 30.500C47.600 35.500 44 39 40.500 41.200L26.300 41.200C22.800 39 19.300 35.500 19.300 30.500C19.300 23.500 28.800 20 33.400 17Z" fill="url(#kg)" stroke="#111" stroke-width=".8" stroke-linejoin="round"/><path d="M23.2 44.5C23.2 41.5 28 40.3 33.500 40.300C39 40.300 43.800 41.500 43.800 44.500C43.800 47.200 40 48.300 33.500 48.300C27 48.300 23.200 47.200 23.200 44.500Z" fill="url(#kg)" stroke="#111" stroke-width=".8" stroke-linejoin="round"/><path d="M33.2 23.5V34.5M27.700 29H38.700" fill="none" stroke="#f4f4ee" stroke-width="1.5" stroke-linecap="butt" stroke-width="1.800"/><path d="M25 42.800C28 40.800 39 40.800 42 42.800M24.500 46.300C28 44.300 39 44.300 42.500 46.300M30.500 49.500h6" fill="none" stroke="#f4f4ee" stroke-width="1.5" stroke-linecap="butt" stroke-width="1.300"/></g><g id="wq" filter="url(#sh)"><path d="M16.6 43L9 22.5L10.900 21.800L20.500 39L19.700 16.500L21.600 16.500L28.200 38L32.200 15.500L34 15.500L38.400 38L45.100 16.500L47 16.500L46.600 39L56.200 21.800L58.100 22.500L50.400 43Z" fill="url(#wg)" stroke="#15150f" stroke-width="1.850" stroke-linejoin="round"/><path d="M16.6 43C22 40 45 40 50.400 43L48.800 47.500L48.200 52.500C51 54 51.500 56.500 50.500 58C48 61.700 19 61.700 16.500 58C15.500 56.500 16 54 18.800 52.500L18.200 47.500Z" fill="url(#wg)" stroke="#15150f" stroke-width="1.850" stroke-linejoin="round"/><circle cx="9.4" cy="19.5" r="3.600" fill="url(#wg)" stroke="#15150f" stroke-width="1.850" stroke-linejoin="round"/><circle cx="20.6" cy="13.5" r="3.600" fill="url(#wg)" stroke="#15150f" stroke-width="1.850" stroke-linejoin="round"/><circle cx="33.1" cy="12.3" r="3.600" fill="url(#wg)" stroke="#15150f" stroke-width="1.850" stroke-linejoin="round"/><circle cx="46" cy="13.5" r="3.600" fill="url(#wg)" stroke="#15150f" stroke-width="1.850" stroke-linejoin="round"/><circle cx="57.6" cy="19.4" r="3.600" fill="url(#wg)" stroke="#15150f" stroke-width="1.850" stroke-linejoin="round"/><path d="M17.5 45.500C23 42.800 44 42.800 49.500 45.500M18.500 50.300C24 47.600 43 47.600 48.500 50.300M17.500 55.500C23 52.800 44 52.800 49.500 55.500" fill="none" stroke="#111" stroke-width="1.5" stroke-linecap="round"/></g><g id="bq" filter="url(#sh)"><path d="M16.6 43L9 22.5L10.900 21.800L20.500 39L19.700 16.500L21.600 16.500L28.200 38L32.200 15.500L34 15.500L38.400 38L45.100 16.500L47 16.500L46.600 39L56.200 21.800L58.100 22.500L50.400 43Z" fill="url(#kg)" stroke="#111" stroke-width=".8" stroke-linejoin="round"/><path d="M16.6 43C22 40 45 40 50.400 43L48.800 47.500L48.200 52.500C51 54 51.500 56.500 50.500 58C48 61.700 19 61.700 16.500 58C15.500 56.500 16 54 18.800 52.500L18.200 47.500Z" fill="url(#kg)" stroke="#111" stroke-width=".8" stroke-linejoin="round"/><circle cx="9.4" cy="19.5" r="3.900" fill="url(#kg)" stroke="#111" stroke-width=".8" stroke-linejoin="round"/><circle cx="20.6" cy="13.5" r="3.900" fill="url(#kg)" stroke="#111" stroke-width=".8" stroke-linejoin="round"/><circle cx="33.1" cy="12.3" r="3.900" fill="url(#kg)" stroke="#111" stroke-width=".8" stroke-linejoin="round"/><circle cx="46" cy="13.5" r="3.900" fill="url(#kg)" stroke="#111" stroke-width=".8" stroke-linejoin="round"/><circle cx="57.6" cy="19.4" r="3.900" fill="url(#kg)" stroke="#111" stroke-width=".8" stroke-linejoin="round"/><path d="M17.5 45.500C23 42.800 44 42.800 49.500 45.500M18.500 50.300C24 47.600 43 47.600 48.500 50.300M17.500 55.500C23 52.800 44 52.800 49.500 55.500" fill="none" stroke="#f4f4ee" stroke-width="1.5" stroke-linecap="butt" stroke-width="1.600"/></g><g id="wk" filter="url(#sh)"><path d="M33.4 9V19.5M29.600 14.300H37.400" fill="none" stroke="#111" stroke-width="2"/><path d="M33.4 44.500C31.500 37 28 24.300 18.500 24.300C11 24.300 7.300 30 8.300 35.500C9.300 40.500 13.500 44 17.900 46.500Z" fill="url(#wg)" stroke="#15150f" stroke-width="1.850" stroke-linejoin="round"/><path d="M33.4 44.500C35.300 37 38.800 24.300 48.300 24.300C55.800 24.300 59.500 30 58.500 35.500C57.500 40.500 53.300 44 48.900 46.500Z" fill="url(#wg)" stroke="#15150f" stroke-width="1.850" stroke-linejoin="round"/><path d="M33.4 18.800C36.800 20.500 37.800 25 36.800 29C35.800 33 34.500 38 33.400 42C32.300 38 31 33 30 29C29 25 30 20.500 33.400 18.800Z" fill="url(#wg)" stroke="#15150f" stroke-width="1.850" stroke-linejoin="round"/><path d="M17.9 46C23 43 44 43 48.900 46L50 50.500C52 52.500 52.300 55.500 51 57.500C48.500 61.500 18.500 61.500 16 57.500C14.700 55.500 15 52.500 17 50.500Z" fill="url(#wg)" stroke="#15150f" stroke-width="1.850" stroke-linejoin="round"/><path d="M17.5 50.800C23 48 44 48 49.500 50.800M16.500 56C23 53 44 53 50.500 56" fill="none" stroke="#111" stroke-width="1.5" stroke-linecap="round"/></g><g id="bk" filter="url(#sh)"><path d="M33.4 9V19.5M29.600 14.300H37.400" fill="none" stroke="#111" stroke-width="2.200"/><path d="M33.4 44.500C31.500 37 28 24.300 18.500 24.300C11 24.300 7.300 30 8.300 35.500C9.300 40.500 13.500 44 17.900 46.500Z" fill="url(#kg)" stroke="#111" stroke-width=".8" stroke-linejoin="round"/><path d="M33.4 44.500C35.300 37 38.800 24.300 48.300 24.300C55.800 24.300 59.500 30 58.500 35.500C57.500 40.500 53.300 44 48.900 46.500Z" fill="url(#kg)" stroke="#111" stroke-width=".8" stroke-linejoin="round"/><path d="M33.4 18.800C36.800 20.500 37.800 25 36.800 29C35.800 33 34.500 38 33.400 42C32.300 38 31 33 30 29C29 25 30 20.500 33.400 18.800Z" fill="url(#kg)" stroke="#111" stroke-width=".8" stroke-linejoin="round"/><path d="M17.9 46C23 43 44 43 48.900 46L50 50.500C52 52.500 52.300 55.500 51 57.500C48.500 61.500 18.500 61.500 16 57.500C14.700 55.500 15 52.500 17 50.500Z" fill="url(#kg)" stroke="#111" stroke-width=".8" stroke-linejoin="round"/><path d="M32 42.500C30 35.500 26.500 26.200 18.500 26.200C12.500 26.200 9.300 30.800 10.200 35.300C11 39.500 14.800 42.500 18.500 44.700M34.800 42.500C36.800 35.500 40.300 26.200 48.300 26.200C54.300 26.200 57.500 30.800 56.600 35.300C55.800 39.500 52 42.500 48.300 44.700M33.400 21.500C35.500 23 36 26 35.300 29C34.700 31.500 34 34 33.400 36.500C32.800 34 32.100 31.500 31.500 29C30.800 26 31.300 23 33.400 21.500Z" fill="none" stroke="#f4f4ee" stroke-width="1.5" stroke-linecap="butt" stroke-width="1.300"/><path d="M17.5 50.800C23 48 44 48 49.500 50.800M16.500 56C23 53 44 53 50.500 56M19.500 46.800C24 44.800 43 44.800 47.500 46.800" fill="none" stroke="#f4f4ee" stroke-width="1.5" stroke-linecap="butt" stroke-width="1.400"/></g></defs><linearGradient id="lsq" x1="0" y1="0" x2="1" y2="1"><stop offset="0" stop-color="#e1e1e1"/><stop offset="1" stop-color="#f8f8f8"/></linearGradient><linearGradient id="dsq" x1="0" y1="0" x2="1" y2="1"><stop offset="0" stop-color="#768bb9"/><stop offset="1" stop-color="#899dd1"/></linearGradient><rect x="0" y="0" width="66" height="66" fill="url(#lsq)"/><path d="M0.5 66V0.5H66" fill="none" stroke="#fff" stroke-width="1"/><rect x="66" y="0" width="66" height="66" fill="url(#dsq)"/><path d="M66.5 66V0.5H132" fill="none" stroke="#6a7fae" stroke-width="1" opacity=".7"/><rect x="132" y="0" width="66" height="66" fill="url(#lsq)"/><path d="M132.5 66V0.5H198" fill="none" stroke="#fff" stroke-width="1"/><rect x="198" y="0" width="66" height="66" fill="url(#dsq)"/><path d="M198.5 66V0.5H264" fill="none" stroke="#6a7fae" stroke-width="1" opacity=".7"/><rect x="264" y="0" width="66" height="66" fill="url(#lsq)"/><path d="M264.5 66V0.5H330" fill="none" stroke="#fff" stroke-width="1"/><rect x="330" y="0" width="66" height="66" fill="url(#dsq)"/><path d="M330.5 66V0.5H396" fill="none" stroke="#6a7fae" stroke-width="1" opacity=".7"/><rect x="396" y="0" width="66" height="66" fill="url(#lsq)"/><path d="M396.5 66V0.5H462" fill="none" stroke="#fff" stroke-width="1"/><rect x="462" y="0" width="66" height="66" fill="url(#dsq)"/><path d="M462.5 66V0.5H528" fill="none" stroke="#6a7fae" stroke-width="1" opacity=".7"/><rect x="0" y="66" width="66" height="66" fill="url(#dsq)"/><path d="M0.5 132V66.5H66" fill="none" stroke="#6a7fae" stroke-width="1" opacity=".7"/><rect x="66" y="66" width="66" height="66" fill="url(#lsq)"/><path d="M66.5 132V66.5H132" fill="none" stroke="#fff" stroke-width="1"/><rect x="132" y="66" width="66" height="66" fill="url(#dsq)"/><path d="M132.5 132V66.5H198" fill="none" stroke="#6a7fae" stroke-width="1" opacity=".7"/><rect x="198" y="66" width="66" height="66" fill="url(#lsq)"/><path d="M198.5 132V66.5H264" fill="none" stroke="#fff" stroke-width="1"/><rect x="264" y="66" width="66" height="66" fill="url(#dsq)"/><path d="M264.5 132V66.5H330" fill="none" stroke="#6a7fae" stroke-width="1" opacity=".7"/><rect x="330" y="66" width="66" height="66" fill="url(#lsq)"/><path d="M330.5 132V66.5H396" fill="none" stroke="#fff" stroke-width="1"/><rect x="396" y="66" width="66" height="66" fill="url(#dsq)"/><path d="M396.5 132V66.5H462" fill="none" stroke="#6a7fae" stroke-width="1" opacity=".7"/><rect x="462" y="66" width="66" height="66" fill="url(#lsq)"/><path d="M462.5 132V66.5H528" fill="none" stroke="#fff" stroke-width="1"/><rect x="0" y="132" width="66" height="66" fill="url(#lsq)"/><path d="M0.5 198V132.5H66" fill="none" stroke="#fff" stroke-width="1"/><rect x="66" y="132" width="66" height="66" fill="url(#dsq)"/><path d="M66.5 198V132.5H132" fill="none" stroke="#6a7fae" stroke-width="1" opacity=".7"/><rect x="132" y="132" width="66" height="66" fill="url(#lsq)"/><path d="M132.5 198V132.5H198" fill="none" stroke="#fff" stroke-width="1"/><rect x="198" y="132" width="66" height="66" fill="url(#dsq)"/><path d="M198.5 198V132.5H264" fill="none" stroke="#6a7fae" stroke-width="1" opacity=".7"/><rect x="264" y="132" width="66" height="66" fill="url(#lsq)"/><path d="M264.5 198V132.5H330" fill="none" stroke="#fff" stroke-width="1"/><rect x="330" y="132" width="66" height="66" fill="url(#dsq)"/><path d="M330.5 198V132.5H396" fill="none" stroke="#6a7fae" stroke-width="1" opacity=".7"/><rect x="396" y="132" width="66" height="66" fill="url(#lsq)"/><path d="M396.5 198V132.5H462" fill="none" stroke="#fff" stroke-width="1"/><rect x="462" y="132" width="66" height="66" fill="url(#dsq)"/><path d="M462.5 198V132.5H528" fill="none" stroke="#6a7fae" stroke-width="1" opacity=".7"/><rect x="0" y="198" width="66" height="66" fill="url(#dsq)"/><path d="M0.5 264V198.5H66" fill="none" stroke="#6a7fae" stroke-width="1" opacity=".7"/><rect x="66" y="198" width="66" height="66" fill="url(#lsq)"/><path d="M66.5 264V198.5H132" fill="none" stroke="#fff" stroke-width="1"/><rect x="132" y="198" width="66" height="66" fill="url(#dsq)"/><path d="M132.5 264V198.5H198" fill="none" stroke="#6a7fae" stroke-width="1" opacity=".7"/><rect x="198" y="198" width="66" height="66" fill="url(#lsq)"/><path d="M198.5 264V198.5H264" fill="none" stroke="#fff" stroke-width="1"/><rect x="264" y="198" width="66" height="66" fill="url(#dsq)"/><path d="M264.5 264V198.5H330" fill="none" stroke="#6a7fae" stroke-width="1" opacity=".7"/><rect x="330" y="198" width="66" height="66" fill="url(#lsq)"/><path d="M330.5 264V198.5H396" fill="none" stroke="#fff" stroke-width="1"/><rect x="396" y="198" width="66" height="66" fill="url(#dsq)"/><path d="M396.5 264V198.5H462" fill="none" stroke="#6a7fae" stroke-width="1" opacity=".7"/><rect x="462" y="198" width="66" height="66" fill="url(#lsq)"/><path d="M462.5 264V198.5H528" fill="none" stroke="#fff" stroke-width="1"/><rect x="0" y="264" width="66" height="66" fill="url(#lsq)"/><path d="M0.5 330V264.5H66" fill="none" stroke="#fff" stroke-width="1"/><rect x="66" y="264" width="66" height="66" fill="url(#dsq)"/><path d="M66.5 330V264.5H132" fill="none" stroke="#6a7fae" stroke-width="1" opacity=".7"/><rect x="132" y="264" width="66" height="66" fill="url(#lsq)"/><path d="M132.5 330V264.5H198" fill="none" stroke="#fff" stroke-width="1"/><rect x="198" y="264" width="66" height="66" fill="url(#dsq)"/><path d="M198.5 330V264.5H264" fill="none" stroke="#6a7fae" stroke-width="1" opacity=".7"/><rect x="264" y="264" width="66" height="66" fill="url(#lsq)"/><path d="M264.5 330V264.5H330" fill="none" stroke="#fff" stroke-width="1"/><rect x="330" y="264" width="66" height="66" fill="url(#dsq)"/><path d="M330.5 330V264.5H396" fill="none" stroke="#6a7fae" stroke-width="1" opacity=".7"/><rect x="396" y="264" width="66" height="66" fill="url(#lsq)"/><path d="M396.5 330V264.5H462" fill="none" stroke="#fff" stroke-width="1"/><rect x="462" y="264" width="66" height="66" fill="url(#dsq)"/><path d="M462.5 330V264.5H528" fill="none" stroke="#6a7fae" stroke-width="1" opacity=".7"/><rect x="0" y="330" width="66" height="66" fill="url(#dsq)"/><path d="M0.5 396V330.5H66" fill="none" stroke="#6a7fae" stroke-width="1" opacity=".7"/><rect x="66" y="330" width="66" height="66" fill="url(#lsq)"/><path d="M66.5 396V330.5H132" fill="none" stroke="#fff" stroke-width="1"/><rect x="132" y="330" width="66" height="66" fill="url(#dsq)"/><path d="M132.5 396V330.5H198" fill="none" stroke="#6a7fae" stroke-width="1" opacity=".7"/><rect x="198" y="330" width="66" height="66" fill="url(#lsq)"/><path d="M198.5 396V330.5H264" fill="none" stroke="#fff" stroke-width="1"/><rect x="264" y="330" width="66" height="66" fill="url(#dsq)"/><path d="M264.5 396V330.5H330" fill="none" stroke="#6a7fae" stroke-width="1" opacity=".7"/><rect x="330" y="330" width="66" height="66" fill="url(#lsq)"/><path d="M330.5 396V330.5H396" fill="none" stroke="#fff" stroke-width="1"/><rect x="396" y="330" width="66" height="66" fill="url(#dsq)"/><path d="M396.5 396V330.5H462" fill="none" stroke="#6a7fae" stroke-width="1" opacity=".7"/><rect x="462" y="330" width="66" height="66" fill="url(#lsq)"/><path d="M462.5 396V330.5H528" fill="none" stroke="#fff" stroke-width="1"/><rect x="0" y="396" width="66" height="66" fill="url(#lsq)"/><path d="M0.5 462V396.5H66" fill="none" stroke="#fff" stroke-width="1"/><rect x="66" y="396" width="66" height="66" fill="url(#dsq)"/><path d="M66.5 462V396.5H132" fill="none" stroke="#6a7fae" stroke-width="1" opacity=".7"/><rect x="132" y="396" width="66" height="66" fill="url(#lsq)"/><path d="M132.5 462V396.5H198" fill="none" stroke="#fff" stroke-width="1"/><rect x="198" y="396" width="66" height="66" fill="url(#dsq)"/><path d="M198.5 462V396.5H264" fill="none" stroke="#6a7fae" stroke-width="1" opacity=".7"/><rect x="264" y="396" width="66" height="66" fill="url(#lsq)"/><path d="M264.5 462V396.5H330" fill="none" stroke="#fff" stroke-width="1"/><rect x="330" y="396" width="66" height="66" fill="url(#dsq)"/><path d="M330.5 462V396.5H396" fill="none" stroke="#6a7fae" stroke-width="1" opacity=".7"/><rect x="396" y="396" width="66" height="66" fill="url(#lsq)"/><path d="M396.5 462V396.5H462" fill="none" stroke="#fff" stroke-width="1"/><rect x="462" y="396" width="66" height="66" fill="url(#dsq)"/><path d="M462.5 462V396.5H528" fill="none" stroke="#6a7fae" stroke-width="1" opacity=".7"/><rect x="0" y="462" width="66" height="66" fill="url(#dsq)"/><path d="M0.5 528V462.5H66" fill="none" stroke="#6a7fae" stroke-width="1" opacity=".7"/><rect x="66" y="462" width="66" height="66" fill="url(#lsq)"/><path d="M66.5 528V462.5H132" fill="none" stroke="#fff" stroke-width="1"/><rect x="132" y="462" width="66" height="66" fill="url(#dsq)"/><path d="M132.5 528V462.5H198" fill="none" stroke="#6a7fae" stroke-width="1" opacity=".7"/><rect x="198" y="462" width="66" height="66" fill="url(#lsq)"/><path d="M198.5 528V462.5H264" fill="none" stroke="#fff" stroke-width="1"/><rect x="264" y="462" width="66" height="66" fill="url(#dsq)"/><path d="M264.5 528V462.5H330" fill="none" stroke="#6a7fae" stroke-width="1" opacity=".7"/><rect x="330" y="462" width="66" height="66" fill="url(#lsq)"/><path d="M330.5 528V462.5H396" fill="none" stroke="#fff" stroke-width="1"/><rect x="396" y="462" width="66" height="66" fill="url(#dsq)"/><path d="M396.5 528V462.5H462" fill="none" stroke="#6a7fae" stroke-width="1" opacity=".7"/><rect x="462" y="462" width="66" height="66" fill="url(#lsq)"/><path d="M462.5 528V462.5H528" fill="none" stroke="#fff" stroke-width="1"/><use href="#br" x="0" y="0"/><use href="#bn" x="66" y="0"/><use href="#bb" x="132" y="0"/><use href="#bq" x="198" y="0"/><use href="#bk" x="264" y="0"/><use href="#bb" x="330" y="0"/><use href="#br" x="462" y="0"/><use href="#bp" x="0" y="66"/><use href="#bp" x="66" y="66"/><use href="#bp" x="132" y="66"/><use href="#bp" x="198" y="66"/><use href="#bp" x="264" y="66"/><use href="#bp" x="330" y="66"/><use href="#bp" x="462" y="66"/><use href="#bn" x="330" y="132"/><use href="#bp" x="396" y="132"/><use href="#wp" x="132" y="264"/><use href="#wp" x="198" y="264"/><use href="#wp" x="462" y="264"/><use href="#wp" x="0" y="396"/><use href="#wp" x="66" y="396"/><use href="#wp" x="264" y="396"/><use href="#wp" x="330" y="396"/><use href="#wp" x="396" y="396"/><use href="#wr" x="0" y="462"/><use href="#wn" x="66" y="462"/><use href="#wb" x="132" y="462"/><use href="#wq" x="198" y="462"/><use href="#wk" x="264" y="462"/><use href="#wb" x="330" y="462"/><use href="#wn" x="396" y="462"/><use href="#wr" x="462" y="462"/></svg><span id="t50" class="t" style="top:207.6px;line-height:17px;font-size:13px;left:-86.7px;width:300px;text-align:center;color:#fff;font-weight:bold;"><span>8</span></span><span id="t51" class="t" style="top:711.7px;line-height:17px;font-size:13px;left:-45.5px;width:300px;text-align:center;color:#fff;font-weight:bold;"><span>A</span></span><span id="t52" class="t" style="top:273.6px;line-height:17px;font-size:13px;left:-86.7px;width:300px;text-align:center;color:#fff;font-weight:bold;"><span>7</span></span><span id="t53" class="t" style="top:711.7px;line-height:17px;font-size:13px;left:20.5px;width:300px;text-align:center;color:#fff;font-weight:bold;"><span>B</span></span><span id="t54" class="t" style="top:339.6px;line-height:17px;font-size:13px;left:-86.7px;width:300px;text-align:center;color:#fff;font-weight:bold;"><span>6</span></span><span id="t55" class="t" style="top:711.7px;line-height:17px;font-size:13px;left:86.5px;width:300px;text-align:center;color:#fff;font-weight:bold;"><span>C</span></span><span id="t56" class="t" style="top:405.6px;line-height:17px;font-size:13px;left:-86.7px;width:300px;text-align:center;color:#fff;font-weight:bold;"><span>5</span></span><span id="t57" class="t" style="top:711.7px;line-height:17px;font-size:13px;left:152.5px;width:300px;text-align:center;color:#fff;font-weight:bold;"><span>D</span></span><span id="t58" class="t" style="top:471.6px;line-height:17px;font-size:13px;left:-86.7px;width:300px;text-align:center;color:#fff;font-weight:bold;"><span>4</span></span><span id="t59" class="t" style="top:711.7px;line-height:17px;font-size:13px;left:218.5px;width:300px;text-align:center;color:#fff;font-weight:bold;"><span>E</span></span><span id="t60" class="t" style="top:537.6px;line-height:17px;font-size:13px;left:-86.7px;width:300px;text-align:center;color:#fff;font-weight:bold;"><span>3</span></span><span id="t61" class="t" style="top:711.7px;line-height:17px;font-size:13px;left:284.5px;width:300px;text-align:center;color:#fff;font-weight:bold;"><span>F</span></span><span id="t62" class="t" style="top:603.6px;line-height:17px;font-size:13px;left:-86.7px;width:300px;text-align:center;color:#fff;font-weight:bold;"><span>2</span></span><span id="t63" class="t" style="top:711.7px;line-height:17px;font-size:13px;left:350.5px;width:300px;text-align:center;color:#fff;font-weight:bold;"><span>G</span></span><span id="t64" class="t" style="top:669.6px;line-height:17px;font-size:13px;left:-86.7px;width:300px;text-align:center;color:#fff;font-weight:bold;"><span>1</span></span><span id="t65" class="t" style="top:711.7px;line-height:17px;font-size:13px;left:416.5px;width:300px;text-align:center;color:#fff;font-weight:bold;"><span>H</span></span><div class="a" style="left:670px;top:156px;width:6px;height:587px;background:#fafafa;"></div><div class="a" style="left:671px;top:408px;width:3px;height:85px;background:repeating-linear-gradient(#c4c4c4 0 2px,transparent 2px 5px)"></div><div class="a" style="left:676px;top:155px;width:687px;height:20px;background:linear-gradient(#c9d2db,#adb8c5)"></div><span id="t66" class="t" style="top:158.95px;line-height:15.5px;font-size:11.5px;left:680px;color:#1e1e1e;letter-spacing:0.236px;"><span>Notation + Openings Book</span></span><svg style="left:1332px;top:163.7px" width="10" height="6" viewBox="0 0 10 6"><path d="M0 0h9.200l-4.600 5.200z" fill="#111"/></svg><svg style="left:1348.5px;top:161.7px" width="9" height="8" viewBox="0 0 9 8"><path d="M.8 .8l7.400 6.400M8.200 .8l-7.400 6.400" stroke="#111" stroke-width="1.700" fill="none"/></svg><div class="a" style="left:676px;top:175px;width:687px;height:25px;background:#f2f2f2;"></div><div class="a" style="left:676px;top:199px;width:687px;height:1px;background:#d9d9d9;"></div><div class="a" style="left:676px;top:176px;width:62px;height:24px;background:#fff;"></div><span id="t67" class="t" style="top:179.95px;line-height:15.5px;font-size:11.5px;left:684px;color:#1e1e1e;letter-spacing:0.594px;"><span>Notation</span></span><div class="a" style="left:738px;top:179px;width:62px;height:20px;background:#f3f3f3;border:1px solid #dadada;border-bottom:none"></div><span id="t68" class="t" style="top:181.95px;line-height:15.5px;font-size:11.5px;left:743px;color:#1e1e1e;letter-spacing:-0.133px;"><span>Reference</span></span><div class="a" style="left:800px;top:179px;width:54px;height:20px;background:#f3f3f3;border:1px solid #dadada;border-bottom:none"></div><span id="t69" class="t" style="top:181.95px;line-height:15.5px;font-size:11.5px;left:807px;color:#1e1e1e;letter-spacing:0.125px;"><span>Training</span></span><div class="a" style="left:854px;top:179px;width:46px;height:20px;background:#f3f3f3;border:1px solid #dadada;border-bottom:none"></div><span id="t70" class="t" style="top:181.95px;line-height:15.5px;font-size:11.5px;left:861px;color:#1e1e1e;letter-spacing:-0.125px;"><span>Table</span></span><div class="a" style="left:900px;top:179px;width:74px;height:20px;background:#f3f3f3;border:1px solid #dadada;border-bottom:none"></div><span id="t71" class="t" style="top:181.95px;line-height:15.5px;font-size:11.5px;left:909px;color:#1e1e1e;letter-spacing:-0.138px;"><span>Score sheet</span></span><div class="a" style="left:974px;top:179px;width:61px;height:20px;background:#f3f3f3;border:1px solid #dadada;border-bottom:none"></div><span id="t72" class="t" style="top:181.95px;line-height:15.5px;font-size:11.5px;left:981px;color:#1e1e1e;letter-spacing:0.098px;"><span>LiveBook</span></span><div class="a" style="left:1035px;top:179px;width:92px;height:20px;background:#f3f3f3;border:1px solid #dadada;border-bottom:none"></div><span id="t73" class="t" style="top:181.95px;line-height:15.5px;font-size:11.5px;left:1041px;color:#1e1e1e;letter-spacing:0.197px;"><span>Openings Book</span></span><div class="a" style="left:676px;top:200px;width:687px;height:51px;background:#fff;"></div><div class="a" style="left:676px;top:251px;width:687px;height:1px;background:#1a1a66;"></div><div class="a" style="left:676px;top:252px;width:671px;height:440px;background:#f2f2f2;"></div><div class="a" style="left:675px;top:156px;width:1px;height:587px;background:#4a4a4a;"></div><div class="a" style="left:1347px;top:252px;width:16px;height:420px;background:#cdcdcd;"></div><div class="a" style="left:1347px;top:252px;width:16px;height:16px;background:#fff;border:1px solid #e8e8e8"></div><svg style="left:1351px;top:258px" width="8" height="5" viewBox="0 0 8 5"><path d="M0 5h8l-4-5z" fill="#606060"/></svg><div class="a" style="left:1347px;top:269px;width:16px;height:16px;background:#fff;border:1px solid #e0e0e0"></div><div class="a" style="left:1347px;top:672px;width:16px;height:16px;background:#fff;border:1px solid #b9b9b9"></div><svg style="left:1351px;top:678px" width="8" height="5" viewBox="0 0 8 5"><path d="M0 0h8l-4 5z" fill="#606060"/></svg><div class="a" style="left:0;top:252px;width:1347px;height:434px;overflow:hidden"><div class="a" style="left:0;top:-252px"><div id="n74" class="nl" style="left:681.5px;top:258px;letter-spacing:0.607px;"><span><span class="m">1.d4  <i class="f fN"><b>♘</b></i>f6  2.c4  g6</span></span></div><div class="a" style="left:841px;top:256px;width:59px;height:24px;background:#0c0c0c"></div><div id="n75" class="nl" style="left:846.5px;top:258px;letter-spacing:0.081px;"><span><span class="h">3.h4!?</span></span></div><div id="n76" class="nl" style="left:900.5px;top:258px;letter-spacing:0.491px;"><span><span class="c">The newest fashion, thanks to Alexander Grischuk!</span></span></div><div id="n77" class="nl" style="left:681.5px;top:282px;letter-spacing:0.299px;"><span><span class="m">3...<i class="f fB"><b>♗</b></i>g7</span></span></div><div id="n78" class="nl" style="left:745.9px;top:282px;letter-spacing:0.320px;"><span><span class="c">Black has several other moves here, such as 3...c5 or 3...Nc6!?. I suggest</span></span></div><div id="n79" class="nl" style="left:681.5px;top:306px;letter-spacing:0.592px;"><span><span class="c">that you have a look at my article on this line in CBM 193!</span></span></div><div id="n80" class="nl" style="left:1146.9px;top:306px;letter-spacing:0.494px;"><span><span class="m">4.<i class="f fN"><b>♘</b></i>c3</span></span></div><div id="n81" class="nl" style="left:1205.5px;top:306px;letter-spacing:1.219px;"><span><span class="c">My opponent</span></span></div><div id="n82" class="nl" style="left:681.5px;top:330px;letter-spacing:0.484px;"><span><span class="c">decided to repeat MVL's play against Carlsen.</span></span></div><div id="n83" class="nl" style="left:1051px;top:330px;letter-spacing:0.521px;"><span><span class="m">4...c5</span></span></div><div id="n84" class="nl" style="left:701.5px;top:354px;letter-spacing:0.537px;"><span><span class="v">[</span><span class="c">Earlier in 2019, the same MVL had gone for a similar system, including an early</span></span></div><div id="n85" class="nl" style="left:701.5px;top:378px;letter-spacing:0.372px;"><span><span class="c">...d6, which he avoided later against Carlsen.</span></span></div><div id="n86" class="nl" style="left:1059px;top:378px;letter-spacing:0.253px;"><span><span class="v u">4...0-0</span></span></div><div id="n87" class="nl" style="left:1117.5px;top:378px;letter-spacing:-0.042px;"><span><span class="v">5.e4</span></span></div><div id="n88" class="nl" style="left:1159.8px;top:378px;letter-spacing:1.341px;"><span><span class="v">d6</span></span></div><div id="n89" class="nl" style="left:1190.2px;top:378px;letter-spacing:-0.406px;"><span><span class="v">6.<i class="f fB"><b>♗</b></i>e2</span></span></div><div id="n90" class="nl" style="left:1244.9px;top:378px;letter-spacing:-0.838px;"><span><span class="v">c5</span></span></div><div id="n91" class="nl" style="left:1273px;top:378px;letter-spacing:0.658px;"><span><span class="v">7.d5</span></span></div><div id="n92" class="nl" style="left:701.1px;top:402px;letter-spacing:0.041px;"><span><span class="v">e6</span></span></div><div id="n93" class="nl" style="left:730.2px;top:402px;letter-spacing:0.392px;"><span><span class="v">8.h5</span></span></div><div id="n94" class="nl" style="left:773.1px;top:402px;letter-spacing:0.340px;"><span><span class="v">exd5</span></span></div><div id="n95" class="nl" style="left:820.3px;top:402px;letter-spacing:0.251px;"><span><span class="v">9.exd5</span></span></div><div id="n96" class="nl" style="left:880.5px;top:402px;letter-spacing:0.370px;"><span><span class="v"><i class="f fR"><b>♖</b></i>e8</span></span></div><div id="n97" class="nl" style="left:922.5px;top:402px;letter-spacing:0.156px;"><span><span class="v">10.h6!?</span></span></div><div id="n98" class="nl" style="left:721.5px;top:426px;"><span><span class="v">(</span></span></div><div id="n99" class="nl" style="left:732.2px;top:426px;letter-spacing:0.347px;"><span><span class="v u">10.hxg6</span></span></div><div id="n100" class="nl" style="left:797.5px;top:426px;letter-spacing:0.560px;"><span><span class="c">leads to unclear positions, for example:</span></span></div><div id="n101" class="nl" style="left:1117px;top:426px;letter-spacing:0.904px;"><span><span class="v">fxg6</span></span></div><div id="n102" class="nl" style="left:1161.1px;top:426px;letter-spacing:0.383px;"><span><span class="v">11.<i class="f fN"><b>♘</b></i>f3</span></span></div><div id="n103" class="nl" style="left:1223.8px;top:426px;letter-spacing:0.923px;"><span><span class="v"><i class="f fN"><b>♘</b></i>bd7</span></span></div><div id="n104" class="nl" style="left:1278px;top:426px;letter-spacing:0.541px;"><span><span class="v">12.0-0</span></span></div><div id="n105" class="nl" style="left:721.5px;top:450px;letter-spacing:0.020px;"><span><span class="v"><i class="f fN"><b>♘</b></i>e5</span></span></div><div id="n106" class="nl" style="left:765.1px;top:450px;letter-spacing:-0.141px;"><span><span class="v">13.<i class="f fN"><b>♘</b></i>xe5</span></span></div><div id="n107" class="nl" style="left:838.5px;top:450px;letter-spacing:-0.703px;"><span><span class="v"><i class="f fR"><b>♖</b></i>xe5</span></span></div><div id="n108" class="nl" style="left:887.5px;top:450px;letter-spacing:0.119px;"><span><span class="v">14.<i class="f fB"><b>♗</b></i>f4</span></span></div><div id="n109" class="nl" style="left:948.5px;top:450px;letter-spacing:0.354px;"><span><span class="v"><i class="f fN"><b>♘</b></i>h5!</span></span></div><div id="n110" class="nl" style="left:999px;top:450px;letter-spacing:-0.208px;"><span><span class="v">15.<i class="f fB"><b>♗</b></i>xe5</span></span></div><div id="n111" class="nl" style="left:1070.7px;top:450px;letter-spacing:-0.336px;"><span><span class="v"><i class="f fB"><b>♗</b></i>xe5</span></span></div><div id="n112" class="nl" style="left:1121.2px;top:450px;letter-spacing:0.326px;"><span><span class="v">16.g3</span></span></div><div id="n113" class="nl" style="left:1173.5px;top:450px;letter-spacing:0.564px;"><span><span class="v"><i class="f fN"><b>♘</b></i>xg3</span></span></div><div id="n114" class="nl" style="left:1226.5px;top:450px;letter-spacing:0.146px;"><span><span class="v">17.fxg3</span></span></div><div id="n115" class="nl" style="left:1291.7px;top:450px;letter-spacing:0.230px;"><span><span class="v"><i class="f fB"><b>♗</b></i>xg3</span></span></div><div id="n116" class="nl" style="left:722px;top:474px;letter-spacing:-0.081px;"><span><span class="v">18.<i class="f fB"><b>♗</b></i>f3</span></span></div><div id="n117" class="nl" style="left:782px;top:474px;letter-spacing:0.520px;"><span><span class="v"><i class="f fQ"><b>♕</b></i>h4</span></span></div><div id="n118" class="nl" style="left:828.5px;top:474px;letter-spacing:-0.159px;"><span><span class="v">19.<i class="f fQ"><b>♕</b></i>e2</span></span></div><div id="n119" class="nl" style="left:894.5px;top:474px;letter-spacing:0.567px;"><span><span class="v"><i class="f fB"><b>♗</b></i>f5</span></span></div><div id="n120" class="nl" style="left:928.9px;top:474px;letter-spacing:0.478px;"><span><span class="c">and the engine claims Black has enough</span></span></div><div id="n121" class="nl" style="left:721.5px;top:498px;letter-spacing:0.748px;"><span><span class="c">compensation.</span></span></div><div id="n122" class="nl" style="left:841.8px;top:498px;"><span><span class="v">)</span></span></div><div id="n123" class="nl" style="left:721.5px;top:522px;"><span><span class="v">(</span></span></div><div id="n124" class="nl" style="left:732.2px;top:522px;letter-spacing:0.319px;"><span><span class="v u">10.<i class="f fK"><b>♔</b></i>f1!?</span></span></div><div id="n125" class="nl" style="left:804.9px;top:522px;letter-spacing:0.469px;"><span><span class="c">could have been tried as well.</span></span></div><div id="n126" class="nl" style="left:1040.3px;top:522px;"><span><span class="v">)</span></span></div><div id="n127" class="nl" style="left:702.4px;top:546px;letter-spacing:-0.324px;"><span><span class="v">10...<i class="f fB"><b>♗</b></i>h8</span></span></div><div id="n128" class="nl" style="left:775.1px;top:546px;letter-spacing:0.324px;"><span><span class="v">11.<i class="f fB"><b>♗</b></i>g5</span></span></div><div id="n129" class="nl" style="left:840.5px;top:546px;letter-spacing:1.070px;"><span><span class="v"><i class="f fQ"><b>♕</b></i>b6</span></span></div><div id="n130" class="nl" style="left:721.5px;top:570px;"><span><span class="v">(</span></span></div><div id="n131" class="nl" style="left:732.2px;top:570px;letter-spacing:0.162px;"><span><span class="v u">11...b5!?</span></span></div><div id="n132" class="nl" style="left:799.9px;top:570px;letter-spacing:0.662px;"><span><span class="c">with the idea</span></span></div><div id="n133" class="nl" style="left:911.9px;top:570px;letter-spacing:0.276px;"><span><span class="v">12.<i class="f fN"><b>♘</b></i>xb5</span></span></div><div id="n134" class="nl" style="left:986.5px;top:570px;letter-spacing:0.854px;"><span><span class="v"><i class="f fQ"><b>♕</b></i>b6!</span></span></div><div id="n135" class="nl" style="left:1032.4px;top:570px;letter-spacing:0.779px;"><span><span class="c">is perhaps something to try.</span></span></div><div id="n136" class="nl" style="left:1258.1px;top:570px;"><span><span class="v">)</span></span></div><div id="n137" class="nl" style="left:702.4px;top:594px;letter-spacing:0.126px;"><span><span class="v">12.b3</span></span></div><div id="n138" class="nl" style="left:754.5px;top:594px;letter-spacing:-0.056px;"><span><span class="v"><i class="f fQ"><b>♕</b></i>a5!?</span></span></div><div id="n139" class="nl" style="left:813.1px;top:594px;letter-spacing:-0.079px;"><span><span class="v">13.<i class="f fB"><b>♗</b></i>d2</span></span></div><div id="n140" class="nl" style="left:878.3px;top:594px;letter-spacing:0.870px;"><span><span class="v"><i class="f fQ"><b>♕</b></i>d8</span></span></div><div id="n141" class="nl" style="left:924.4px;top:594px;letter-spacing:-0.001px;"><span><span class="v">14.<i class="f fK"><b>♔</b></i>f1</span></span></div><div id="n142" class="nl" style="left:985.8px;top:594px;letter-spacing:0.170px;"><span><span class="v"><i class="f fN"><b>♘</b></i>e4</span></span></div><div id="n143" class="nl" style="left:1031.1px;top:594px;letter-spacing:-0.124px;"><span><span class="v">15.<i class="f fN"><b>♘</b></i>xe4</span></span></div><div id="n144" class="nl" style="left:1106.3px;top:594px;letter-spacing:-0.503px;"><span><span class="v"><i class="f fR"><b>♖</b></i>xe4</span></span></div><div id="n145" class="nl" style="left:1156.1px;top:594px;letter-spacing:-0.575px;"><span><span class="v">16.<i class="f fR"><b>♖</b></i>c1</span></span></div><div id="n146" class="nl" style="left:1218.3px;top:594px;letter-spacing:0.020px;"><span><span class="v"><i class="f fR"><b>♖</b></i>h4</span></span></div><div id="n147" class="nl" style="left:1261.4px;top:594px;letter-spacing:-0.158px;"><span><span class="v">17.<i class="f fR"><b>♖</b></i>xh4</span></span></div><div id="n148" class="nl" style="left:701.5px;top:618px;letter-spacing:0.197px;"><span><span class="v"><i class="f fQ"><b>♕</b></i>xh4</span></span></div><div id="n149" class="nl" style="left:755.1px;top:618px;letter-spacing:0.326px;"><span><span class="v">18.g3</span></span></div><div id="n150" class="nl" style="left:808.1px;top:618px;letter-spacing:0.870px;"><span><span class="v"><i class="f fQ"><b>♕</b></i>d8</span></span></div><div id="n151" class="nl" style="left:854.2px;top:618px;letter-spacing:0.441px;"><span><span class="v">19.<i class="f fK"><b>♔</b></i>g2</span></span></div><div id="n152" class="nl" style="left:922.5px;top:618px;letter-spacing:0.920px;"><span><span class="v"><i class="f fN"><b>♘</b></i>d7</span></span></div><div id="n153" class="nl" style="left:967.9px;top:618px;letter-spacing:0.459px;"><span><span class="v">20.<i class="f fN"><b>♘</b></i>f3</span></span></div><div id="n154" class="nl" style="left:1032.4px;top:618px;letter-spacing:0.220px;"><span><span class="v"><i class="f fN"><b>♘</b></i>e5</span></span></div><div id="n155" class="nl" style="left:1072.7px;top:618px;letter-spacing:0.645px;"><span><span class="c">Every move up to now was</span></span></div><div id="n156" class="nl" style="left:701.6px;top:642px;letter-spacing:0.460px;"><span><span class="c">more or less natural.</span></span></div><div id="n157" class="nl" style="left:872.1px;top:642px;letter-spacing:0.109px;"><span><span class="v">21.<i class="f fN"><b>♘</b></i>xe5</span></span></div><div id="n158" class="nl" style="left:948.5px;top:642px;"><span><span class="iv">(</span></span></div><div id="n159" class="nl" style="left:955.5px;top:642px;letter-spacing:0.410px;"><span><span class="c">Here Grischuk may have missed a chance to</span></span></div><div id="n160" class="nl" style="left:721.5px;top:666px;letter-spacing:0.755px;"><span><span class="c">get somne advantage with</span></span></div><div id="n161" class="nl" style="left:941.3px;top:666px;letter-spacing:1.054px;"><span><span class="iv">21.<i class="f fN"><b>♘</b></i>g5!</span></span></div><div id="n162" class="nl" style="left:1009px;top:666px;"><span><span class="iv">)</span></span></div><div id="n163" class="nl" style="left:1019.2px;top:666px;letter-spacing:-0.365px;"><span><span class="v">21...<i class="f fB"><b>♗</b></i>xe5</span></span></div><div id="n164" class="nl" style="left:1100.1px;top:666px;letter-spacing:0.181px;"><span><span class="v">22.<i class="f fB"><b>♗</b></i>d3</span></span></div><div id="n165" class="nl" style="left:1166px;top:666px;letter-spacing:0.120px;"><span><span class="v"><i class="f fB"><b>♗</b></i>d7</span></span></div><div id="n166" class="nl" style="left:1209.5px;top:666px;letter-spacing:0.159px;"><span><span class="v">23.<i class="f fQ"><b>♕</b></i>f3</span></span></div><div id="n167" class="nl" style="left:1272.3px;top:666px;letter-spacing:1.134px;"><span><span class="v">f5</span></span></div></div></div><div class="a" style="left:676px;top:692px;width:687px;height:2px;background:#111;"></div><div class="a" style="left:676px;top:694px;width:687px;height:49px;background:#fff;"></div><div class="a" style="left:687px;top:719px;width:676px;height:1px;background:#a9a9a9;"></div><div class="a" style="left:680px;top:720px;width:1px;height:21px;background:repeating-linear-gradient(#b0b0b0 0 1px,transparent 1px 3px)"></div><svg style="left:738px;top:203px;overflow:hidden" width="30" height="42" viewBox="0 0 30 42"><defs><filter id="pb1" x="-10%" y="-10%" width="120%" height="120%"><feGaussianBlur stdDeviation="0.9"/></filter><clipPath id="pc1"><rect width="30" height="42"/></clipPath></defs><g clip-path="url(#pc1)"><rect width="30" height="42" fill="#4a4038"/><g filter="url(#pb1)"><rect x="-2" y="-2" width="34" height="12" fill="#2a2622"/><rect x="17" y="-2" width="10" height="11" fill="#8fd8dc"/><rect x="-1" y="2" width="6" height="17" fill="#c98a88"/><rect x="25" y="2" width="7" height="22" fill="#1e1a18"/><ellipse cx="15" cy="11" rx="10" ry="7.500" fill="#5e4226"/><ellipse cx="9" cy="16" rx="4" ry="7" fill="#3a2a1c"/><ellipse cx="17.500" cy="21" rx="7" ry="8.500" fill="#d8a283"/><ellipse cx="12" cy="22" rx="3" ry="4" fill="#c08a68"/><rect x="22" y="20" width="10" height="10" fill="#3a2c28"/><ellipse cx="24.500" cy="33" rx="4.500" ry="5" fill="#f1eeee"/><rect x="24" y="37" width="8" height="6" fill="#1c1a18"/><path d="M-2 44V22C2 23 6 25 9 28C12 31 16 35 22 38L24 44Z" fill="#1d8a46"/><path d="M3 44V30C7 31 10 35 12 44Z" fill="#34a860"/></g></g></svg><svg style="left:773px;top:205px" width="23.300" height="17" viewBox="0 0 24 17" preserveAspectRatio="none"><defs><linearGradient id="flb" x1="0" y1="0" x2="0" y2="1"><stop offset="0" stop-color="#5a5ab4"/><stop offset=".45" stop-color="#25259a"/><stop offset="1" stop-color="#12128a"/></linearGradient><linearGradient id="flr" x1="0" y1="0" x2="0" y2="1"><stop offset="0" stop-color="#ee5566"/><stop offset=".45" stop-color="#e5283e"/><stop offset="1" stop-color="#d4122c"/></linearGradient><linearGradient id="flw" x1="0" y1="0" x2="0" y2="1"><stop offset="0" stop-color="#fff"/><stop offset=".85" stop-color="#fbfbfb"/><stop offset="1" stop-color="#d8d8d8"/></linearGradient></defs><rect width="7.800" height="17" fill="url(#flb)"/><rect x="7.800" width="8.400" height="17" fill="url(#flw)"/><rect x="16.200" width="7.800" height="17" fill="url(#flr)"/></svg><svg style="left:1242px;top:205px" width="23.300" height="17" viewBox="0 0 24 17" preserveAspectRatio="none"><defs><linearGradient id="flb" x1="0" y1="0" x2="0" y2="1"><stop offset="0" stop-color="#5a5ab4"/><stop offset=".45" stop-color="#25259a"/><stop offset="1" stop-color="#12128a"/></linearGradient><linearGradient id="flr" x1="0" y1="0" x2="0" y2="1"><stop offset="0" stop-color="#ee5566"/><stop offset=".45" stop-color="#e5283e"/><stop offset="1" stop-color="#d4122c"/></linearGradient><linearGradient id="flw" x1="0" y1="0" x2="0" y2="1"><stop offset="0" stop-color="#fff"/><stop offset=".85" stop-color="#fbfbfb"/><stop offset="1" stop-color="#d8d8d8"/></linearGradient></defs><rect width="7.800" height="17" fill="url(#flb)"/><rect x="7.800" width="8.400" height="17" fill="url(#flw)"/><rect x="16.200" width="7.800" height="17" fill="url(#flr)"/></svg><svg style="left:1278px;top:203px;overflow:hidden" width="30" height="42" viewBox="0 0 30 42"><defs><filter id="pb2" x="-10%" y="-10%" width="120%" height="120%"><feGaussianBlur stdDeviation="0.85"/></filter><clipPath id="pc2"><rect width="30" height="42"/></clipPath></defs><g clip-path="url(#pc2)"><rect width="30" height="42" fill="#08080b"/><g filter="url(#pb2)"><rect x="4" y="6" width="4.500" height="14" fill="#aab4e6"/><rect x="3.500" y="1" width="4" height="6" fill="#33245c"/><ellipse cx="17.500" cy="8.500" rx="7" ry="5" fill="#7b6a4a"/><ellipse cx="16.800" cy="15.500" rx="5.800" ry="7" fill="#b98c72"/><ellipse cx="20" cy="14.500" rx="2.800" ry="2.200" fill="#8e6a58"/><ellipse cx="13" cy="12" rx="2" ry="4" fill="#6a5438"/><path d="M-1 44V25C3 21.500 7 20.500 10 22L14 27L23 25C28 26 31 29 31 33V44Z" fill="#121217"/><path d="M14.500 31C14.500 27 17 23.500 20.500 22.500C22.500 23.500 22 26 20 28L19.500 34Z" fill="#cfa48a"/><path d="M-1 35.500C8 32 19 32.500 31 38.500V42L20 40C12 39 5 39.500 -1 40.500Z" fill="#d4ac90"/><rect x="-1" y="40" width="19" height="3" fill="#14110f"/></g></g></svg><span id="t168" class="t" style="top:204.7px;line-height:24px;font-size:17px;left:805px;color:#000;font-weight:bold;letter-spacing:0.383px;font-family:'Liberation Sans','DejaVu Sans',sans-serif;"><span>Edouard,Romain</span></span><span id="t169" class="t" style="top:204.7px;line-height:24px;font-size:17px;left:950px;color:#111;letter-spacing:0.391px;font-family:'Liberation Sans','DejaVu Sans',sans-serif;"><span>2650</span></span><span id="t170" class="t" style="top:204.7px;line-height:24px;font-size:17px;left:994px;color:#000;font-weight:bold;letter-spacing:0.328px;font-family:'Liberation Sans','DejaVu Sans',sans-serif;"><span>-</span></span><span id="t171" class="t" style="top:204.7px;line-height:24px;font-size:17px;left:1007px;color:#000;font-weight:bold;letter-spacing:0.327px;font-family:'Liberation Sans','DejaVu Sans',sans-serif;"><span>Gozzoli,Yannick</span></span><span id="t172" class="t" style="top:204.7px;line-height:24px;font-size:17px;left:1143px;color:#111;letter-spacing:0.391px;font-family:'Liberation Sans','DejaVu Sans',sans-serif;"><span>2614</span></span><span id="t173" class="t" style="top:204.7px;line-height:24px;font-size:17px;left:1192px;color:#000;font-weight:bold;font-family:'Liberation Sans','DejaVu Sans',sans-serif;transform:scaleX(1.17);transform-origin:0 50%;"><span>½-½</span></span><span id="t174" class="t" style="top:228.7px;line-height:24px;font-size:17px;left:779px;color:#000;font-weight:bold;letter-spacing:-0.125px;font-family:'Liberation Sans','DejaVu Sans',sans-serif;"><span>E60</span></span><span id="t175" class="t" style="top:228.7px;line-height:24px;font-size:17px;left:814px;color:#111;letter-spacing:0.088px;font-family:'Liberation Sans','DejaVu Sans',sans-serif;"><span>FRA-ch 94th Chartres (1.1) 17.08.2019</span></span><span id="t176" class="t" style="top:228.7px;line-height:24px;font-size:17px;left:1116px;color:#111;font-style:italic;letter-spacing:0.141px;font-family:'Liberation Sans','DejaVu Sans',sans-serif;"><span>[Edouard, Romain]</span></span><svg style="left:692.8px;top:722px" width="10" height="17" viewBox="0 0 10 17"><path d="M5 1L9.500 7H6.500V14H3.500V7H.5Z" fill="#1b7a1b" stroke="#0d4d0d" stroke-width=".6"/><rect x="1" y="15" width="8" height="1.200" fill="#bbb"/></svg><svg style="left:717.8px;top:723px" width="15" height="16" viewBox="0 0 15 16"><path d="M2 2L12 13M12 2L2 13" stroke="#cc2222" stroke-width="1.600"/><path d="M1 9h5l2 2h5" stroke="#777" stroke-width="1" fill="none"/><path d="M5 14h6" stroke="#bbb" stroke-width="1"/></svg><span id="t177" class="t" style="top:721.2px;line-height:20px;font-size:17px;left:602.3px;width:300px;text-align:center;color:#000;font-weight:bold;"><span>]</span></span><svg style="left:773.8px;top:723px" width="12" height="15" viewBox="0 0 12 15"><g transform="translate(2,0)"><path d="M4 1.200a1.900 1.900 0 0 1 1.300 3.300c1 .5 1.500 1.300 1.500 2.300 0 .9-.4 1.600-1 2 1.400 .8 2.200 2 2.200 3.700v.8h-8v-.8c0-1.700 .8-2.900 2.200-3.700-.6-.4-1-1.100-1-2 0-1 .5-1.800 1.500-2.300a1.900 1.900 0 0 1 1.300-3.300z" fill="#111"/></g><path d="M0 2.500h3M1.500 2.500v3" stroke="#c33" stroke-width=".8"/></svg><svg style="left:799.8px;top:723px" width="14" height="15" viewBox="0 0 14 15"><g transform="translate(1,0)"><path d="M4 1.200a1.900 1.900 0 0 1 1.300 3.300c1 .5 1.500 1.300 1.500 2.300 0 .9-.4 1.600-1 2 1.400 .8 2.200 2 2.200 3.700v.8h-8v-.8c0-1.700 .8-2.900 2.200-3.700-.6-.4-1-1.100-1-2 0-1 .5-1.800 1.500-2.300a1.900 1.900 0 0 1 1.300-3.300z" fill="#cc1f2e"/></g><path d="M10.500 8h3M12 8v3" stroke="#555" stroke-width=".8"/></svg><svg style="left:824.8px;top:722px" width="17" height="17" viewBox="0 0 17 17"><rect x="0" y="0" width="8.500" height="17" fill="#b08a6a"/><rect x="8.500" y="0" width="8.500" height="17" fill="#7a5638"/><path d="M1.500 15V13L2.500 11V6H1.500V2.500H7V6H6V11L7 13V15Z" fill="#e8dcc8" stroke="#3a2a1a" stroke-width=".5"/><path d="M10 15V13.500C10 11 11 10 12 9.500A2 2 0 1 1 14 9.500C15 10 16 11 16 13.500V15Z" fill="#2a1a10"/></svg><span id="t178" class="t" style="top:721.7px;line-height:20px;font-size:19.5px;left:709.8px;width:300px;text-align:center;color:#2a2a2a;font-family:'Liberation Sans','DejaVu Sans',sans-serif;"><span>!!</span></span><span id="t179" class="t" style="top:721.7px;line-height:20px;font-size:19.5px;left:736.8px;width:300px;text-align:center;color:#2a2a2a;font-family:'Liberation Sans','DejaVu Sans',sans-serif;"><span>!</span></span><span id="t180" class="t" style="top:721.7px;line-height:20px;font-size:19.5px;left:763.8px;width:300px;text-align:center;color:#2a2a2a;font-family:'Liberation Sans','DejaVu Sans',sans-serif;"><span>!?</span></span><span id="t181" class="t" style="top:721.7px;line-height:20px;font-size:19.5px;left:790.8px;width:300px;text-align:center;color:#2a2a2a;font-family:'Liberation Sans','DejaVu Sans',sans-serif;"><span>?!</span></span><span id="t182" class="t" style="top:721.7px;line-height:20px;font-size:19.5px;left:817.8px;width:300px;text-align:center;color:#2a2a2a;font-family:'Liberation Sans','DejaVu Sans',sans-serif;"><span>?</span></span><span id="t183" class="t" style="top:721.7px;line-height:20px;font-size:19.5px;left:844.8px;width:300px;text-align:center;color:#2a2a2a;font-family:'Liberation Sans','DejaVu Sans',sans-serif;"><span>??</span></span><span id="t184" class="t" style="top:721.7px;line-height:20px;font-size:15.5px;left:871.8px;width:300px;text-align:center;color:#2a2a2a;font-family:'Liberation Sans','DejaVu Sans',sans-serif;letter-spacing:-.5px;"><span>+−</span></span><span id="t185" class="t" style="top:721.7px;line-height:20px;font-size:18.5px;left:898.8px;width:300px;text-align:center;color:#2a2a2a;font-family:'Liberation Sans','DejaVu Sans',sans-serif;"><span>±</span></span><span id="t186" class="t" style="top:721.7px;line-height:20px;font-size:18.5px;left:952.8px;width:300px;text-align:center;color:#2a2a2a;font-family:'Liberation Sans','DejaVu Sans',sans-serif;"><span>=</span></span><span id="t187" class="t" style="top:721.7px;line-height:20px;font-size:17.5px;left:979.8px;width:300px;text-align:center;color:#2a2a2a;font-family:'Liberation Sans','DejaVu Sans',sans-serif;"><span>∞</span></span><span id="t188" class="t" style="top:721.7px;line-height:20px;font-size:18.5px;left:1060.8px;width:300px;text-align:center;color:#2a2a2a;font-family:'Liberation Sans','DejaVu Sans',sans-serif;"><span>∓</span></span><span id="t189" class="t" style="top:721.7px;line-height:20px;font-size:15.5px;left:1087.8px;width:300px;text-align:center;color:#2a2a2a;font-family:'Liberation Sans','DejaVu Sans',sans-serif;letter-spacing:-.5px;"><span>−+</span></span><span id="t190" class="t" style="top:721.7px;line-height:20px;font-size:17px;left:1114.8px;width:300px;text-align:center;color:#2a2a2a;font-family:'DejaVu Sans',sans-serif;font-weight:bold;"><span>⇄</span></span><span id="t191" class="t" style="top:718.7px;line-height:20px;font-size:16px;left:925.8px;width:300px;text-align:center;color:#111;font-family:'Liberation Sans','DejaVu Sans',sans-serif;"><span>±</span></span><div class="a" style="left:1070.8px;top:738px;width:10px;height:1.5px;background:#111;"></div><span id="t192" class="t" style="top:717.7px;line-height:20px;font-size:15px;left:1006.8px;width:300px;text-align:center;color:#111;font-family:'Liberation Sans','DejaVu Sans',sans-serif;"><span>∞</span></span><div class="a" style="left:1151.8px;top:733px;width:10px;height:1.5px;background:#111;"></div><div class="a" style="left:1151.8px;top:737px;width:10px;height:1.5px;background:#111;"></div><span id="t193" class="t" style="top:724.7px;line-height:20px;font-size:16px;left:1033.8px;width:300px;text-align:center;color:#111;font-family:'Liberation Sans','DejaVu Sans',sans-serif;"><span>∓</span></span><div class="a" style="left:1178.8px;top:722.5px;width:10px;height:1.5px;background:#111;"></div><svg style="left:1282.3px;top:724px" width="19" height="14" viewBox="0 0 19 14"><g transform="rotate(-28 9 7)"><rect x="1" y="3.500" width="9" height="7" rx="1" fill="#7fa6e0" stroke="#5a7fb8" stroke-width=".6"/><rect x="10" y="3.500" width="7" height="7" rx="1" fill="#f0a0a0" stroke="#c87878" stroke-width=".6"/></g></svg><div class="a" style="left:0px;top:743px;width:1366px;height:23px;background:#f0f0f0;"></div><div class="a" style="left:0px;top:743px;width:1366px;height:1px;background:#e6e6e6;"></div><span id="t194" class="t" style="top:748.95px;line-height:15.5px;font-size:11.5px;left:12px;color:#333;letter-spacing:-0.618px;"><span>ChessBase 14</span></span><div class="a" style="left:1118px;top:749px;width:224px;height:15px;background:#fff;border:1px solid #8a8a8a"></div><span id="t195" class="t" style="top:749.45px;line-height:15.5px;font-size:11.5px;left:1122px;color:#111;letter-spacing:-1.625px;"><span>0%</span></span><div class="a" style="left:1158px;top:754px;width:133px;height:5px;background:#d6d8da;border-right:1px solid #aaa;border-bottom:1px solid #bbb"></div><svg style="left:1351px;top:753px" width="10" height="10" viewBox="0 0 10 10"><rect x="8" y="0" width="1.500" height="1.500" fill="#b5b5b5"/><rect x="4" y="4" width="1.500" height="1.500" fill="#b5b5b5"/><rect x="8" y="4" width="1.500" height="1.500" fill="#b5b5b5"/><rect x="0" y="8" width="1.500" height="1.500" fill="#b5b5b5"/><rect x="4" y="8" width="1.500" height="1.500" fill="#b5b5b5"/><rect x="8" y="8" width="1.500" height="1.500" fill="#b5b5b5"/></svg><div class="a" style="left:0px;top:0px;width:1px;height:768px;background:#205dae;"></div><div class="a" style="left:1px;top:63px;width:2px;height:703px;background:#f0f0f0;"></div><div class="a" style="left:0px;top:63px;width:1px;height:705px;background:#2a62b5;"></div><div class="a" style="left:1363px;top:63px;width:1px;height:703px;background:#f0f0f0;"></div><div class="a" style="left:1364px;top:0px;width:2px;height:768px;background:#2461b4;"></div><div class="a" style="left:0px;top:766px;width:1366px;height:2px;background:#2a62b5;"></div></body></html>
